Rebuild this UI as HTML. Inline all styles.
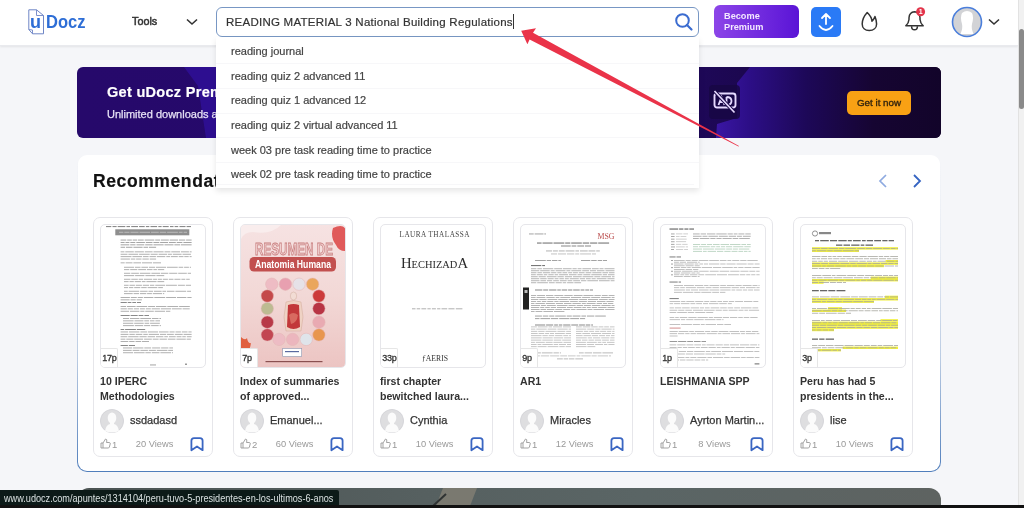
<!DOCTYPE html>
<html><head><meta charset="utf-8">
<style>
*{box-sizing:border-box;margin:0;padding:0}
html,body{width:1024px;height:508px;overflow:hidden}
body>*{will-change:transform}
body{background:#f5f6f9;font-family:"Liberation Sans",sans-serif;position:relative;color:#333}
.abs{position:absolute}
#header{position:absolute;left:0;top:0;width:1018px;height:46px;background:#fff;box-shadow:0 1px 2px rgba(0,0,0,0.08);border-bottom:1px solid #e9eaee}
#scroll{position:absolute;left:1018px;top:0;width:6px;height:508px;background:#f1f1f1;border-left:1px solid #e2e2e2}
#thumb{position:absolute;left:1019px;top:29px;width:5px;height:80px;background:#8a8a8a;border-radius:3px}
.logo{left:28px;top:9px}
.tools{left:132px;top:15px;font-size:10.8px;color:#333;-webkit-text-stroke:0.5px #333}
.search{left:216px;top:7px;width:483px;height:30px;border:1px solid #7897c4;border-radius:6px;background:#fff}
.search .txt{position:absolute;left:9px;top:8px;font-size:11.5px;letter-spacing:0.25px;color:#333;-webkit-text-stroke:0.2px #333;white-space:nowrap}
.dd{z-index:10;left:216px;top:37px;width:483px;height:151px;background:#fff;box-shadow:0 3px 6px rgba(0,0,0,0.10)}
.dd div{position:absolute;left:15px;font-size:11px;color:#444;-webkit-text-stroke:0.2px #444;white-space:nowrap}
.dd hr{position:absolute;left:0;width:100%;border:0;border-top:1px solid #f7f7f9}
.prem{left:714px;top:5px;width:85px;height:33px;border-radius:6px;background:linear-gradient(90deg,#8c45e8,#5a14d6);color:#f3e8ff;font-weight:bold;font-size:9.2px;line-height:11.5px;padding:5.8px 0 0 10px}
.upl{left:811px;top:7px;width:30px;height:30px;border-radius:5px;background:#2a7af6}
.banner{left:77px;top:67px;width:864px;height:71px;border-radius:6px;overflow:hidden;background:linear-gradient(90deg,#26096b 0%,#25096a 30%,#1e0858 72%,#12042a 100%)}
.btn{left:847px;top:91px;width:64px;height:24px;border-radius:5px;background:#f9a114;color:#33240e;font-size:9.8px;-webkit-text-stroke:0.35px #33240e;text-align:center;line-height:24px}
.sect{left:77px;top:154px;width:864px;height:318px;border-radius:10px;border:1px solid transparent;background:linear-gradient(#fff,#fff) padding-box,linear-gradient(to bottom,rgba(74,122,184,0) 0%,rgba(74,122,184,0.08) 30%,rgba(74,122,184,0.35) 65%,#4f7dbb 100%) border-box}
.rec{left:93px;top:171px;font-size:17.5px;letter-spacing:0.6px;-webkit-text-stroke:0.2px #111;font-weight:bold;color:#111}
.card{position:absolute;top:217px;width:120px;height:240px;border:1px solid #e6e6ea;border-radius:7px;background:#fff}
.card .th{position:absolute;left:6px;top:6px;width:106px;height:144px;border:1px solid #e6e6ea;border-radius:5px;overflow:hidden;background:#fff}
.card .pg{position:absolute;left:0;bottom:0;width:17px;height:19px;background:#fff;border-top:1px solid #e6e6e6;border-right:1px solid #e6e6e6;border-top-right-radius:2px;font-size:9px;color:#333;-webkit-text-stroke:0.3px #333;padding:3.5px 0 0 1.2px;letter-spacing:-0.2px;white-space:nowrap}
.card .tt{position:absolute;left:6px;top:155.5px;width:110px;font-size:10.6px;font-weight:bold;color:#333;line-height:15px}
.card .av{position:absolute;left:6px;top:191px;width:24px;height:24px;border-radius:50%;background:#e7e7e9;overflow:hidden}
.card .nm{position:absolute;left:36px;top:196px;font-size:11px;color:#333;-webkit-text-stroke:0.25px #333;white-space:nowrap}
.card .lk{position:absolute;left:6px;top:216.8px}
.card .ct{position:absolute;left:18px;top:220.5px;font-size:9.5px;color:#999}
.card .vw{position:absolute;left:30px;width:61px;text-align:center;top:220.5px;font-size:9.3px;color:#999;white-space:nowrap}
.card .bm{position:absolute;left:96px;top:219px}
.darkb{left:77px;top:488px;width:864px;height:30px;border-radius:12px 12px 0 0;overflow:hidden;background:linear-gradient(90deg,#4a5252 0%,#566060 40%,#5a6565 65%,#5e6361 100%)}
.status{left:0;top:490px;width:339px;height:18px;background:#0c1a18;color:#d9e0e0;font-size:11px;line-height:17px;padding-left:4px;white-space:nowrap;border-top-right-radius:2px}
.status span{display:inline-block;transform:scaleX(0.83);transform-origin:0 0}
.blackbar{left:0;top:505px;width:1024px;height:3px;background:#111}
</style></head><body>
<div id="header"></div>
<div id="scroll"></div><div id="thumb"></div>

<!-- logo -->
<svg class="abs logo" width="60" height="28" viewBox="0 0 60 28">
  <path d="M0.8 0.8 H8.5 L15.5 6.5 V24.8 H4.5 L0.8 20.5 Z" fill="#fff" stroke="#6f86c6" stroke-width="1"/>
  <path d="M8.5 0.8 V6.5 H15.5" fill="none" stroke="#6f86c6" stroke-width="0.9"/>
  <path d="M0.8 20.5 L4.5 21 V24.8" fill="none" stroke="#6f86c6" stroke-width="0.9"/>
  <text x="2" y="19" font-family="Liberation Sans" font-weight="bold" font-size="18" fill="#2e6ed6" textLength="11" lengthAdjust="spacingAndGlyphs">u</text>
  <text x="18" y="18.8" font-family="Liberation Sans" font-weight="bold" font-size="19" fill="#2e6ed6" textLength="39.5" lengthAdjust="spacingAndGlyphs">Docz</text>
</svg>
<div class="abs tools">Tools</div>
<svg class="abs" style="left:186px;top:18px" width="12" height="8" viewBox="0 0 12 8"><path d="M1 1.5 L6 6 L11 1.5" fill="none" stroke="#333" stroke-width="1.6"/></svg>

<div class="abs search"><span class="txt">READING MATERIAL 3 National Building Regulations</span></div>
<svg class="abs" style="left:674px;top:12px" width="20" height="20" viewBox="0 0 20 20"><circle cx="8.5" cy="8.5" r="6.3" fill="none" stroke="#3b6cd0" stroke-width="2"/><path d="M13 13 L17.5 17.5" stroke="#3b6cd0" stroke-width="2.2" stroke-linecap="round"/></svg>

<div class="abs dd">
  <div style="top:8px">reading journal</div>
  <hr style="top:26px">
  <div style="top:33px">reading quiz 2 advanced 11</div>
  <hr style="top:51px">
  <div style="top:57px">reading quiz 1 advanced 12</div>
  <hr style="top:76px">
  <div style="top:82px">reading quiz 2 virtual advanced 11</div>
  <hr style="top:100px">
  <div style="top:107px">week 03 pre task reading time to practice</div>
  <hr style="top:125px">
  <div style="top:131px">week 02 pre task reading time to practice</div>
  <hr style="top:147px;width:99%">
</div>

<div class="abs prem">Become<br>Premium</div>
<div class="abs upl"><svg width="30" height="30" viewBox="0 0 30 30"><path d="M15 17 V7.5 M11 11 L15 7 L19 11" fill="none" stroke="#fff" stroke-width="1.8" stroke-linecap="round" stroke-linejoin="round"/><path d="M8.5 19 Q15 27 21.5 19" fill="none" stroke="#fff" stroke-width="1.8" stroke-linecap="round"/></svg></div>
<svg class="abs" style="left:860px;top:11px" width="20" height="22" viewBox="0 0 20 22"><path d="M7.2 1.5 C4 5 2.2 9 2.2 13 C2.2 17 5 19.5 9.2 19.5 C13.5 19.5 16.6 17 16.6 13 C16.6 10 16 8 15 5.5 C14 8 13 9.5 12 10.2 C11.8 6.5 9.8 4 7.2 1.5 Z" fill="none" stroke="#333" stroke-width="1.5" stroke-linejoin="round"/></svg>
<svg class="abs" style="left:903px;top:6px" width="26" height="28" viewBox="0 0 26 28"><path d="M2.8 19.8 Q5.6 17.5 6 13.5 V11.8 Q6.4 6.2 11.5 5.8 Q16.6 6.2 17 11.8 V13.5 Q17.4 17.5 20.2 19.8 Z" fill="none" stroke="#333" stroke-width="1.5" stroke-linejoin="round"/><path d="M8.6 20.2 A2.9 3.6 0 0 0 14.4 20.2" fill="none" stroke="#333" stroke-width="1.5"/><circle cx="17.6" cy="5.8" r="4.5" fill="#e3344a"/><text x="17.6" y="8.4" text-anchor="middle" font-family="Liberation Sans" font-weight="bold" font-size="7" fill="#fff">1</text></svg>
<svg class="abs" style="left:951px;top:6px" width="32" height="32" viewBox="0 0 32 32"><circle cx="16" cy="16" r="14.5" fill="#d2d3d6"/><path d="M9.5 28 Q12 22 11 18 Q9 11 11 7 Q16 3 21 7 Q23 11 21 18 Q20 22 22.5 28 Z" fill="#fff"/><circle cx="16" cy="16" r="14.5" fill="none" stroke="#4a7edb" stroke-width="1.6"/></svg>
<svg class="abs" style="left:988px;top:18px" width="12" height="8" viewBox="0 0 12 8"><path d="M1 1.5 L6 6 L11 1.5" fill="none" stroke="#333" stroke-width="1.6"/></svg>
<div class="abs banner"><svg width="864" height="71" viewBox="0 0 864 71" style="position:absolute;left:0;top:0"><defs><linearGradient id="bg2" x1="639" x2="864" gradientUnits="userSpaceOnUse"><stop offset="0" stop-color="#3a16a4"/><stop offset="0.15" stop-color="#2c0e86"/><stop offset="0.4" stop-color="#1d0858"/><stop offset="0.7" stop-color="#160532"/><stop offset="1" stop-color="#12042a"/></linearGradient></defs><path d="M107 0 L121 19 L129 71 H145 V0 Z" fill="#30109a" opacity="0.8"/><path d="M673 0 L660 16 L660 51 L640 57 L639 71 H864 V0 Z" fill="url(#bg2)"/></svg>
<div style="position:absolute;left:30px;top:17px;font-size:14.5px;letter-spacing:0.3px;font-weight:bold;color:#fff;white-space:nowrap;-webkit-text-stroke:0.2px #fff">Get uDocz Premium</div>
<div style="position:absolute;left:30px;top:41px;font-size:11px;color:#e6e0f5;-webkit-text-stroke:0.25px #e6e0f5;white-space:nowrap">Unlimited downloads and no ads</div>
<div style="position:absolute;left:632px;top:18px;width:31px;height:34px;background:#180744;border-radius:4px;opacity:0.85"></div>
<svg width="26" height="26" viewBox="0 0 26 26" style="position:absolute;left:636px;top:23px"><rect x="1.5" y="3.5" width="21" height="14" rx="2.5" fill="none" stroke="#e6daff" stroke-width="1.9"/><path d="M5.5 15 L8.5 7 L11.5 15 M6.8 12 H10.2 M13.5 7 V15 M13.5 7 Q18.5 7 18.5 11 Q18.5 15 13.5 15" fill="none" stroke="#e6daff" stroke-width="1.8"/><path d="M1.5 1 L21.5 22.5" stroke="#1a0748" stroke-width="3.5"/><path d="M1.5 1 L21.5 22.5" stroke="#e6daff" stroke-width="1.7"/></svg>
</div>
<div class="abs btn">Get it now</div>

<div class="abs sect"></div>
<div class="abs rec">Recommendations</div>
<svg class="abs" style="left:876px;top:173px" width="48" height="16" viewBox="0 0 48 16"><path d="M10 2 L4 8 L10 14" fill="none" stroke="#8eaae0" stroke-width="1.7"/><path d="M38 2 L44 8 L38 14" fill="none" stroke="#3564c2" stroke-width="1.8"/></svg>

<div class="card" style="left:93px">
<div class="th"><svg width="106" height="143" viewBox="0 0 106 143"><rect x="5.0" y="1.0" width="5.3" height="1.1" fill="#8a8a8a"/><rect x="11.5" y="1.0" width="4.1" height="1.1" fill="#8a8a8a"/><rect x="16.7" y="1.0" width="7.6" height="1.1" fill="#8a8a8a"/><rect x="25.5" y="1.0" width="3.5" height="1.1" fill="#8a8a8a"/><rect x="30.2" y="1.0" width="6.8" height="1.1" fill="#8a8a8a"/><rect x="38.1" y="1.0" width="5.6" height="1.1" fill="#8a8a8a"/><rect x="44.9" y="1.0" width="3.4" height="1.1" fill="#8a8a8a"/><rect x="49.5" y="1.0" width="6.6" height="1.1" fill="#8a8a8a"/><rect x="57.3" y="1.0" width="3.3" height="1.1" fill="#8a8a8a"/><rect x="61.7" y="1.0" width="6.0" height="1.1" fill="#8a8a8a"/><rect x="69.0" y="1.0" width="3.5" height="1.1" fill="#8a8a8a"/><rect x="73.6" y="1.0" width="3.6" height="1.1" fill="#8a8a8a"/><rect x="78.5" y="1.0" width="6.0" height="1.1" fill="#8a8a8a"/><rect x="85.6" y="1.0" width="4.4" height="1.1" fill="#8a8a8a"/><rect x="14.3" y="4.3" width="74" height="6" fill="#8e8e8e"/><rect x="18.0" y="6.8" width="4.4" height="0.8" fill="#c8c8c8"/><rect x="23.3" y="6.8" width="5.2" height="0.8" fill="#c8c8c8"/><rect x="29.4" y="6.8" width="8.2" height="0.8" fill="#c8c8c8"/><rect x="38.5" y="6.8" width="10.6" height="0.8" fill="#c8c8c8"/><rect x="50.0" y="6.8" width="7.8" height="0.8" fill="#c8c8c8"/><rect x="58.7" y="6.8" width="6.5" height="0.8" fill="#c8c8c8"/><rect x="66.1" y="6.8" width="10.8" height="0.8" fill="#c8c8c8"/><rect x="77.8" y="6.8" width="3.8" height="0.8" fill="#c8c8c8"/><rect x="82.6" y="6.8" width="3.4" height="0.8" fill="#c8c8c8"/><rect x="19.6" y="14.6" width="5.7" height="0.9" fill="#9c9c9c"/><rect x="26.2" y="14.6" width="4.6" height="0.9" fill="#9c9c9c"/><rect x="31.7" y="14.6" width="4.4" height="0.9" fill="#9c9c9c"/><rect x="36.9" y="14.6" width="5.8" height="0.9" fill="#9c9c9c"/><rect x="43.7" y="14.6" width="9.6" height="0.9" fill="#9c9c9c"/><rect x="54.2" y="14.6" width="4.9" height="0.9" fill="#9c9c9c"/><rect x="59.9" y="14.6" width="7.9" height="0.9" fill="#9c9c9c"/><rect x="68.7" y="14.6" width="8.3" height="0.9" fill="#9c9c9c"/><rect x="77.9" y="14.6" width="6.3" height="0.9" fill="#9c9c9c"/><rect x="85.1" y="14.6" width="5.5" height="0.9" fill="#9c9c9c"/><rect x="19.6" y="17.0" width="4.0" height="0.9" fill="#9c9c9c"/><rect x="24.5" y="17.0" width="3.9" height="0.9" fill="#9c9c9c"/><rect x="29.3" y="17.0" width="5.0" height="0.9" fill="#9c9c9c"/><rect x="35.3" y="17.0" width="8.6" height="0.9" fill="#9c9c9c"/><rect x="44.8" y="17.0" width="6.7" height="0.9" fill="#9c9c9c"/><rect x="52.4" y="17.0" width="5.9" height="0.9" fill="#9c9c9c"/><rect x="59.1" y="17.0" width="7.9" height="0.9" fill="#9c9c9c"/><rect x="67.9" y="17.0" width="6.9" height="0.9" fill="#9c9c9c"/><rect x="75.7" y="17.0" width="5.7" height="0.9" fill="#9c9c9c"/><rect x="82.4" y="17.0" width="8.2" height="0.9" fill="#9c9c9c"/><rect x="19.6" y="19.4" width="8.7" height="0.9" fill="#9c9c9c"/><rect x="29.2" y="19.4" width="5.3" height="0.9" fill="#9c9c9c"/><rect x="35.5" y="19.4" width="7.8" height="0.9" fill="#9c9c9c"/><rect x="44.2" y="19.4" width="7.4" height="0.9" fill="#9c9c9c"/><rect x="52.5" y="19.4" width="10.1" height="0.9" fill="#9c9c9c"/><rect x="63.5" y="19.4" width="9.0" height="0.9" fill="#9c9c9c"/><rect x="73.4" y="19.4" width="5.7" height="0.9" fill="#9c9c9c"/><rect x="79.9" y="19.4" width="10.7" height="0.9" fill="#9c9c9c"/><rect x="19.6" y="21.8" width="4.4" height="0.9" fill="#9c9c9c"/><rect x="24.9" y="21.8" width="6.6" height="0.9" fill="#9c9c9c"/><rect x="32.4" y="21.8" width="9.2" height="0.9" fill="#9c9c9c"/><rect x="42.5" y="21.8" width="4.6" height="0.9" fill="#9c9c9c"/><rect x="48.0" y="21.8" width="7.1" height="0.9" fill="#9c9c9c"/><rect x="19.6" y="26.4" width="3.8" height="0.9" fill="#a8a8a8"/><rect x="24.3" y="26.4" width="8.5" height="0.9" fill="#a8a8a8"/><rect x="33.7" y="26.4" width="9.2" height="0.9" fill="#a8a8a8"/><rect x="43.8" y="26.4" width="7.8" height="0.9" fill="#a8a8a8"/><rect x="52.5" y="26.4" width="10.1" height="0.9" fill="#a8a8a8"/><rect x="63.5" y="26.4" width="5.9" height="0.9" fill="#a8a8a8"/><rect x="70.3" y="26.4" width="8.7" height="0.9" fill="#a8a8a8"/><rect x="79.9" y="26.4" width="8.0" height="0.9" fill="#a8a8a8"/><rect x="88.7" y="26.4" width="1.9" height="0.9" fill="#a8a8a8"/><rect x="19.6" y="28.8" width="6.9" height="0.9" fill="#a8a8a8"/><rect x="27.4" y="28.8" width="9.8" height="0.9" fill="#a8a8a8"/><rect x="38.1" y="28.8" width="10.6" height="0.9" fill="#a8a8a8"/><rect x="49.6" y="28.8" width="7.1" height="0.9" fill="#a8a8a8"/><rect x="57.6" y="28.8" width="8.5" height="0.9" fill="#a8a8a8"/><rect x="66.9" y="28.8" width="4.0" height="0.9" fill="#a8a8a8"/><rect x="71.8" y="28.8" width="8.8" height="0.9" fill="#a8a8a8"/><rect x="81.5" y="28.8" width="8.4" height="0.9" fill="#a8a8a8"/><rect x="19.6" y="31.2" width="10.9" height="0.9" fill="#a8a8a8"/><rect x="31.4" y="31.2" width="9.7" height="0.9" fill="#a8a8a8"/><rect x="42.0" y="31.2" width="5.6" height="0.9" fill="#a8a8a8"/><rect x="48.5" y="31.2" width="6.4" height="0.9" fill="#a8a8a8"/><rect x="55.8" y="31.2" width="8.5" height="0.9" fill="#a8a8a8"/><rect x="65.3" y="31.2" width="3.7" height="0.9" fill="#a8a8a8"/><rect x="69.8" y="31.2" width="7.0" height="0.9" fill="#a8a8a8"/><rect x="77.7" y="31.2" width="4.8" height="0.9" fill="#a8a8a8"/><rect x="83.3" y="31.2" width="4.4" height="0.9" fill="#a8a8a8"/><rect x="88.6" y="31.2" width="2.0" height="0.9" fill="#a8a8a8"/><rect x="19.6" y="33.6" width="9.3" height="0.9" fill="#a8a8a8"/><rect x="29.8" y="33.6" width="4.5" height="0.9" fill="#a8a8a8"/><rect x="35.1" y="33.6" width="5.4" height="0.9" fill="#a8a8a8"/><rect x="41.4" y="33.6" width="6.4" height="0.9" fill="#a8a8a8"/><rect x="48.7" y="33.6" width="6.4" height="0.9" fill="#a8a8a8"/><rect x="19.6" y="37.4" width="4.1" height="0.9" fill="#a8a8a8"/><rect x="24.6" y="37.4" width="6.9" height="0.9" fill="#a8a8a8"/><rect x="32.4" y="37.4" width="7.6" height="0.9" fill="#a8a8a8"/><rect x="40.9" y="37.4" width="10.1" height="0.9" fill="#a8a8a8"/><rect x="51.9" y="37.4" width="8.1" height="0.9" fill="#a8a8a8"/><rect x="23.0" y="41.8" width="10.0" height="0.9" fill="#a8a8a8"/><rect x="33.9" y="41.8" width="5.6" height="0.9" fill="#a8a8a8"/><rect x="40.4" y="41.8" width="6.6" height="0.9" fill="#a8a8a8"/><rect x="47.9" y="41.8" width="6.2" height="0.9" fill="#a8a8a8"/><rect x="55.0" y="41.8" width="10.1" height="0.9" fill="#a8a8a8"/><rect x="66.0" y="41.8" width="10.7" height="0.9" fill="#a8a8a8"/><rect x="77.6" y="41.8" width="4.6" height="0.9" fill="#a8a8a8"/><rect x="83.1" y="41.8" width="4.8" height="0.9" fill="#a8a8a8"/><rect x="88.8" y="41.8" width="1.2" height="0.9" fill="#a8a8a8"/><rect x="23.0" y="44.2" width="5.3" height="0.9" fill="#a8a8a8"/><rect x="29.2" y="44.2" width="7.1" height="0.9" fill="#a8a8a8"/><rect x="37.2" y="44.2" width="7.9" height="0.9" fill="#a8a8a8"/><rect x="46.0" y="44.2" width="5.5" height="0.9" fill="#a8a8a8"/><rect x="52.4" y="44.2" width="3.5" height="0.9" fill="#a8a8a8"/><rect x="56.8" y="44.2" width="6.4" height="0.9" fill="#a8a8a8"/><rect x="23.0" y="47.8" width="6.3" height="0.9" fill="#a8a8a8"/><rect x="30.2" y="47.8" width="7.7" height="0.9" fill="#a8a8a8"/><rect x="38.8" y="47.8" width="10.6" height="0.9" fill="#a8a8a8"/><rect x="50.4" y="47.8" width="8.7" height="0.9" fill="#a8a8a8"/><rect x="59.9" y="47.8" width="7.4" height="0.9" fill="#a8a8a8"/><rect x="68.2" y="47.8" width="8.1" height="0.9" fill="#a8a8a8"/><rect x="77.2" y="47.8" width="8.6" height="0.9" fill="#a8a8a8"/><rect x="86.7" y="47.8" width="3.3" height="0.9" fill="#a8a8a8"/><rect x="23.0" y="50.2" width="10.2" height="0.9" fill="#a8a8a8"/><rect x="34.1" y="50.2" width="9.3" height="0.9" fill="#a8a8a8"/><rect x="44.4" y="50.2" width="10.1" height="0.9" fill="#a8a8a8"/><rect x="55.4" y="50.2" width="7.8" height="0.9" fill="#a8a8a8"/><rect x="23.0" y="53.8" width="6.4" height="0.9" fill="#a8a8a8"/><rect x="30.3" y="53.8" width="6.5" height="0.9" fill="#a8a8a8"/><rect x="37.7" y="53.8" width="4.3" height="0.9" fill="#a8a8a8"/><rect x="42.9" y="53.8" width="8.3" height="0.9" fill="#a8a8a8"/><rect x="52.1" y="53.8" width="4.0" height="0.9" fill="#a8a8a8"/><rect x="56.9" y="53.8" width="4.0" height="0.9" fill="#a8a8a8"/><rect x="61.8" y="53.8" width="5.1" height="0.9" fill="#a8a8a8"/><rect x="67.8" y="53.8" width="4.7" height="0.9" fill="#a8a8a8"/><rect x="73.4" y="53.8" width="6.1" height="0.9" fill="#a8a8a8"/><rect x="80.4" y="53.8" width="3.9" height="0.9" fill="#a8a8a8"/><rect x="85.2" y="53.8" width="3.5" height="0.9" fill="#a8a8a8"/><rect x="23.0" y="56.2" width="4.6" height="0.9" fill="#a8a8a8"/><rect x="28.5" y="56.2" width="4.3" height="0.9" fill="#a8a8a8"/><rect x="33.7" y="56.2" width="6.2" height="0.9" fill="#a8a8a8"/><rect x="40.8" y="56.2" width="3.7" height="0.9" fill="#a8a8a8"/><rect x="45.4" y="56.2" width="10.1" height="0.9" fill="#a8a8a8"/><rect x="56.4" y="56.2" width="6.8" height="0.9" fill="#a8a8a8"/><rect x="23.0" y="59.8" width="4.6" height="0.9" fill="#a8a8a8"/><rect x="28.5" y="59.8" width="5.4" height="0.9" fill="#a8a8a8"/><rect x="34.8" y="59.8" width="6.1" height="0.9" fill="#a8a8a8"/><rect x="41.8" y="59.8" width="6.2" height="0.9" fill="#a8a8a8"/><rect x="48.9" y="59.8" width="4.4" height="0.9" fill="#a8a8a8"/><rect x="54.3" y="59.8" width="9.9" height="0.9" fill="#a8a8a8"/><rect x="65.0" y="59.8" width="10.9" height="0.9" fill="#a8a8a8"/><rect x="76.9" y="59.8" width="7.0" height="0.9" fill="#a8a8a8"/><rect x="84.8" y="59.8" width="5.2" height="0.9" fill="#a8a8a8"/><rect x="23.0" y="62.2" width="4.1" height="0.9" fill="#a8a8a8"/><rect x="28.0" y="62.2" width="4.3" height="0.9" fill="#a8a8a8"/><rect x="33.2" y="62.2" width="6.1" height="0.9" fill="#a8a8a8"/><rect x="40.2" y="62.2" width="5.5" height="0.9" fill="#a8a8a8"/><rect x="46.6" y="62.2" width="9.7" height="0.9" fill="#a8a8a8"/><rect x="57.2" y="62.2" width="4.7" height="0.9" fill="#a8a8a8"/><rect x="23.0" y="65.8" width="3.7" height="0.9" fill="#a8a8a8"/><rect x="27.6" y="65.8" width="10.6" height="0.9" fill="#a8a8a8"/><rect x="39.1" y="65.8" width="7.5" height="0.9" fill="#a8a8a8"/><rect x="47.5" y="65.8" width="4.6" height="0.9" fill="#a8a8a8"/><rect x="53.0" y="65.8" width="7.6" height="0.9" fill="#a8a8a8"/><rect x="61.4" y="65.8" width="3.7" height="0.9" fill="#a8a8a8"/><rect x="66.0" y="65.8" width="7.5" height="0.9" fill="#a8a8a8"/><rect x="74.4" y="65.8" width="10.8" height="0.9" fill="#a8a8a8"/><rect x="86.1" y="65.8" width="3.9" height="0.9" fill="#a8a8a8"/><rect x="23.0" y="68.2" width="8.7" height="0.9" fill="#a8a8a8"/><rect x="32.6" y="68.2" width="5.5" height="0.9" fill="#a8a8a8"/><rect x="39.0" y="68.2" width="6.3" height="0.9" fill="#a8a8a8"/><rect x="46.1" y="68.2" width="4.8" height="0.9" fill="#a8a8a8"/><rect x="51.8" y="68.2" width="9.3" height="0.9" fill="#a8a8a8"/><rect x="62.0" y="68.2" width="1.2" height="0.9" fill="#a8a8a8"/><rect x="19.6" y="72.0" width="9.3" height="0.9" fill="#a8a8a8"/><rect x="29.8" y="72.0" width="6.0" height="0.9" fill="#a8a8a8"/><rect x="36.7" y="72.0" width="5.2" height="0.9" fill="#a8a8a8"/><rect x="42.8" y="72.0" width="9.6" height="0.9" fill="#a8a8a8"/><rect x="53.3" y="72.0" width="10.9" height="0.9" fill="#a8a8a8"/><rect x="65.1" y="72.0" width="9.9" height="0.9" fill="#a8a8a8"/><rect x="75.9" y="72.0" width="9.5" height="0.9" fill="#a8a8a8"/><rect x="86.3" y="72.0" width="4.3" height="0.9" fill="#a8a8a8"/><rect x="19.6" y="74.4" width="9.0" height="0.9" fill="#a8a8a8"/><rect x="29.5" y="74.4" width="5.2" height="0.9" fill="#a8a8a8"/><rect x="35.6" y="74.4" width="5.3" height="0.9" fill="#a8a8a8"/><rect x="19.6" y="77.0" width="6.2" height="1.0" fill="#8a8a8a"/><rect x="26.7" y="77.0" width="3.7" height="1.0" fill="#8a8a8a"/><rect x="31.3" y="77.0" width="3.7" height="1.0" fill="#8a8a8a"/><rect x="35.9" y="77.0" width="4.1" height="1.0" fill="#8a8a8a"/><rect x="19.6" y="81.0" width="5.4" height="0.9" fill="#a8a8a8"/><rect x="25.9" y="81.0" width="8.7" height="0.9" fill="#a8a8a8"/><rect x="35.5" y="81.0" width="10.7" height="0.9" fill="#a8a8a8"/><rect x="47.1" y="81.0" width="6.9" height="0.9" fill="#a8a8a8"/><rect x="54.9" y="81.0" width="10.5" height="0.9" fill="#a8a8a8"/><rect x="66.3" y="81.0" width="10.9" height="0.9" fill="#a8a8a8"/><rect x="78.1" y="81.0" width="10.7" height="0.9" fill="#a8a8a8"/><rect x="19.6" y="83.4" width="6.2" height="0.9" fill="#a8a8a8"/><rect x="26.7" y="83.4" width="5.2" height="0.9" fill="#a8a8a8"/><rect x="32.8" y="83.4" width="5.2" height="0.9" fill="#a8a8a8"/><rect x="38.9" y="83.4" width="5.0" height="0.9" fill="#a8a8a8"/><rect x="44.8" y="83.4" width="5.0" height="0.9" fill="#a8a8a8"/><rect x="50.7" y="83.4" width="8.2" height="0.9" fill="#a8a8a8"/><rect x="59.8" y="83.4" width="10.3" height="0.9" fill="#a8a8a8"/><rect x="70.9" y="83.4" width="9.8" height="0.9" fill="#a8a8a8"/><rect x="81.6" y="83.4" width="7.1" height="0.9" fill="#a8a8a8"/><rect x="19.6" y="85.8" width="8.4" height="0.9" fill="#a8a8a8"/><rect x="28.9" y="85.8" width="9.5" height="0.9" fill="#a8a8a8"/><rect x="39.3" y="85.8" width="4.1" height="0.9" fill="#a8a8a8"/><rect x="44.3" y="85.8" width="8.5" height="0.9" fill="#a8a8a8"/><rect x="53.7" y="85.8" width="10.3" height="0.9" fill="#a8a8a8"/><rect x="64.9" y="85.8" width="4.4" height="0.9" fill="#a8a8a8"/><rect x="19.6" y="90.0" width="9.1" height="1.0" fill="#8a8a8a"/><rect x="29.6" y="90.0" width="7.1" height="1.0" fill="#8a8a8a"/><rect x="37.6" y="90.0" width="4.8" height="1.0" fill="#8a8a8a"/><rect x="43.4" y="90.0" width="4.6" height="1.0" fill="#8a8a8a"/><rect x="22.0" y="93.0" width="6.0" height="0.9" fill="#a8a8a8"/><rect x="28.9" y="93.0" width="9.5" height="0.9" fill="#a8a8a8"/><rect x="39.3" y="93.0" width="10.8" height="0.9" fill="#a8a8a8"/><rect x="51.0" y="93.0" width="6.5" height="0.9" fill="#a8a8a8"/><rect x="58.4" y="93.0" width="1.6" height="0.9" fill="#a8a8a8"/><rect x="22.0" y="95.4" width="10.6" height="0.9" fill="#a8a8a8"/><rect x="33.5" y="95.4" width="8.9" height="0.9" fill="#a8a8a8"/><rect x="43.3" y="95.4" width="4.8" height="0.9" fill="#a8a8a8"/><rect x="49.0" y="95.4" width="4.5" height="0.9" fill="#a8a8a8"/><rect x="54.4" y="95.4" width="4.6" height="0.9" fill="#a8a8a8"/><rect x="22.0" y="97.8" width="10.3" height="0.9" fill="#a8a8a8"/><rect x="33.2" y="97.8" width="9.5" height="0.9" fill="#a8a8a8"/><rect x="43.6" y="97.8" width="4.6" height="0.9" fill="#a8a8a8"/><rect x="49.1" y="97.8" width="9.7" height="0.9" fill="#a8a8a8"/><rect x="22.0" y="100.2" width="10.9" height="0.9" fill="#a8a8a8"/><rect x="33.8" y="100.2" width="8.4" height="0.9" fill="#a8a8a8"/><rect x="43.1" y="100.2" width="6.1" height="0.9" fill="#a8a8a8"/><rect x="50.1" y="100.2" width="7.6" height="0.9" fill="#a8a8a8"/><rect x="58.6" y="100.2" width="1.4" height="0.9" fill="#a8a8a8"/><rect x="19.6" y="104.0" width="3.6" height="1.0" fill="#8a8a8a"/><rect x="24.1" y="104.0" width="10.8" height="1.0" fill="#8a8a8a"/><rect x="35.8" y="104.0" width="8.4" height="1.0" fill="#8a8a8a"/><rect x="19.6" y="106.5" width="7.4" height="0.9" fill="#a8a8a8"/><rect x="27.9" y="106.5" width="10.5" height="0.9" fill="#a8a8a8"/><rect x="39.4" y="106.5" width="6.8" height="0.9" fill="#a8a8a8"/><rect x="47.0" y="106.5" width="10.0" height="0.9" fill="#a8a8a8"/><rect x="57.9" y="106.5" width="9.7" height="0.9" fill="#a8a8a8"/><rect x="68.5" y="106.5" width="5.1" height="0.9" fill="#a8a8a8"/><rect x="74.5" y="106.5" width="5.4" height="0.9" fill="#a8a8a8"/><rect x="80.8" y="106.5" width="5.7" height="0.9" fill="#a8a8a8"/><rect x="87.4" y="106.5" width="3.2" height="0.9" fill="#a8a8a8"/><rect x="19.6" y="108.9" width="7.9" height="0.9" fill="#a8a8a8"/><rect x="28.4" y="108.9" width="5.4" height="0.9" fill="#a8a8a8"/><rect x="34.7" y="108.9" width="6.6" height="0.9" fill="#a8a8a8"/><rect x="42.3" y="108.9" width="4.5" height="0.9" fill="#a8a8a8"/><rect x="47.7" y="108.9" width="10.3" height="0.9" fill="#a8a8a8"/><rect x="58.9" y="108.9" width="6.2" height="0.9" fill="#a8a8a8"/><rect x="65.9" y="108.9" width="6.9" height="0.9" fill="#a8a8a8"/><rect x="73.8" y="108.9" width="7.9" height="0.9" fill="#a8a8a8"/><rect x="82.6" y="108.9" width="8.0" height="0.9" fill="#a8a8a8"/><rect x="19.6" y="111.3" width="6.7" height="0.9" fill="#a8a8a8"/><rect x="27.2" y="111.3" width="10.4" height="0.9" fill="#a8a8a8"/><rect x="38.4" y="111.3" width="7.3" height="0.9" fill="#a8a8a8"/><rect x="46.6" y="111.3" width="7.5" height="0.9" fill="#a8a8a8"/><rect x="55.0" y="111.3" width="7.4" height="0.9" fill="#a8a8a8"/><rect x="63.3" y="111.3" width="3.6" height="0.9" fill="#a8a8a8"/><rect x="67.9" y="111.3" width="6.8" height="0.9" fill="#a8a8a8"/><rect x="75.6" y="111.3" width="4.9" height="0.9" fill="#a8a8a8"/><rect x="81.3" y="111.3" width="3.5" height="0.9" fill="#a8a8a8"/><rect x="85.8" y="111.3" width="4.8" height="0.9" fill="#a8a8a8"/><rect x="19.6" y="113.7" width="4.8" height="0.9" fill="#a8a8a8"/><rect x="25.3" y="113.7" width="7.1" height="0.9" fill="#a8a8a8"/><rect x="33.2" y="113.7" width="8.9" height="0.9" fill="#a8a8a8"/><rect x="43.1" y="113.7" width="7.7" height="0.9" fill="#a8a8a8"/><rect x="51.7" y="113.7" width="5.9" height="0.9" fill="#a8a8a8"/><rect x="58.5" y="113.7" width="7.4" height="0.9" fill="#a8a8a8"/><rect x="66.8" y="113.7" width="7.7" height="0.9" fill="#a8a8a8"/><rect x="75.4" y="113.7" width="9.4" height="0.9" fill="#a8a8a8"/><rect x="85.6" y="113.7" width="4.3" height="0.9" fill="#a8a8a8"/><rect x="19.6" y="116.1" width="7.7" height="0.9" fill="#a8a8a8"/><rect x="28.2" y="116.1" width="5.4" height="0.9" fill="#a8a8a8"/><rect x="34.5" y="116.1" width="5.6" height="0.9" fill="#a8a8a8"/><rect x="40.9" y="116.1" width="7.1" height="0.9" fill="#a8a8a8"/><rect x="19.6" y="120.0" width="7.3" height="1.0" fill="#8a8a8a"/><rect x="27.8" y="120.0" width="6.2" height="1.0" fill="#8a8a8a"/><rect x="22.0" y="122.5" width="9.2" height="0.9" fill="#a8a8a8"/><rect x="32.1" y="122.5" width="10.3" height="0.9" fill="#a8a8a8"/><rect x="43.3" y="122.5" width="6.8" height="0.9" fill="#a8a8a8"/><rect x="51.1" y="122.5" width="8.1" height="0.9" fill="#a8a8a8"/><rect x="60.1" y="122.5" width="7.3" height="0.9" fill="#a8a8a8"/><rect x="68.3" y="122.5" width="3.7" height="0.9" fill="#a8a8a8"/><rect x="22.0" y="124.9" width="8.7" height="0.9" fill="#a8a8a8"/><rect x="31.6" y="124.9" width="6.9" height="0.9" fill="#a8a8a8"/><rect x="39.4" y="124.9" width="7.5" height="0.9" fill="#a8a8a8"/><rect x="47.8" y="124.9" width="7.1" height="0.9" fill="#a8a8a8"/><rect x="55.8" y="124.9" width="10.6" height="0.9" fill="#a8a8a8"/><rect x="67.2" y="124.9" width="4.8" height="0.9" fill="#a8a8a8"/><rect x="22.0" y="127.3" width="10.1" height="0.9" fill="#a8a8a8"/><rect x="33.0" y="127.3" width="10.6" height="0.9" fill="#a8a8a8"/><rect x="44.4" y="127.3" width="5.4" height="0.9" fill="#a8a8a8"/><rect x="50.8" y="127.3" width="7.7" height="0.9" fill="#a8a8a8"/><rect x="59.4" y="127.3" width="10.6" height="0.9" fill="#a8a8a8"/><rect x="70.9" y="127.3" width="1.1" height="0.9" fill="#a8a8a8"/><rect x="49" y="139.5" width="6" height="0.9" fill="#999"/><rect x="84" y="138.5" width="2" height="1.5" fill="#999"/></svg><div class="pg">17p</div></div>
<div class="tt">10 IPERC<br>Methodologies</div>
<div class="av"><svg width="24" height="24" viewBox="0 0 24 24"><circle cx="12" cy="12" r="11.5" fill="#dedee0" stroke="#d6d6da" stroke-width="1"/><ellipse cx="12" cy="9" rx="4.3" ry="5.6" fill="#fbfbfb"/><path d="M10 13 V15 Q6 16 5 22 Q12 25 19 22 Q18 16 14 15 V13 Z" fill="#fbfbfb"/></svg></div>
<div class="nm">ssdadasd</div>
<div class="lk"><svg width="11" height="11" viewBox="0 0 11 11"><path d="M1 5 H3 V10 H1 Z M3 5 L5.5 1 Q7 1 6.8 3 L6.5 4.5 H9.5 Q10.5 4.7 10.2 6 L9.3 9.3 Q9 10 8 10 H3" fill="none" stroke="#9a9a9a" stroke-width="0.9" stroke-linejoin="round"/></svg></div>
<div class="ct">1</div>
<div class="vw">20 Views</div>
<div class="bm"><svg width="14" height="15" viewBox="0 0 14 15"><path d="M1.4 3.8 Q1.4 1.2 4 1.2 H10 Q12.6 1.2 12.6 3.8 V13.2 L7 9.4 L1.4 13.2 Z" fill="none" stroke="#3a66c2" stroke-width="1.8" stroke-linejoin="round"/></svg></div>
</div>
<div class="card" style="left:233px">
<div class="th"><svg width="106" height="143" viewBox="0 0 106 143"><defs><linearGradient id="pk" x1="0" y1="0" x2="0" y2="1"><stop offset="0" stop-color="#f6e2e2"/><stop offset="0.5" stop-color="#f2d8d6"/><stop offset="1" stop-color="#ecc4c2"/></linearGradient></defs><rect x="0" y="0" width="106" height="143" fill="url(#pk)"/><path d="M0 0 H40 Q30 10 12 7 Q3 7 0 14 Z" fill="#f9eded"/><path d="M92 3 Q104 -3 106 8 V26 Q98 27 95 20 Q89 12 92 3 Z" fill="#e05a5a"/><text x="53" y="30" text-anchor="middle" font-family="Liberation Sans" font-weight="bold" font-size="16" fill="#f0cfcf" stroke="#c98080" stroke-width="0.8" textLength="78" lengthAdjust="spacingAndGlyphs">RESUMEN DE</text><rect x="8.5" y="32" width="86.5" height="14.5" rx="4.5" fill="#c2504f"/><text x="52" y="43.3" text-anchor="middle" font-family="Liberation Sans" font-weight="bold" font-size="10.5" fill="#fff" textLength="76" lengthAdjust="spacingAndGlyphs">Anatomia Humana</text><circle cx="30.8" cy="59.2" r="6.2" fill="#eebcc4" stroke="#e2b4b4" stroke-width="0.5"/><circle cx="44.4" cy="59.2" r="6.2" fill="#e8a0b0" stroke="#e2b4b4" stroke-width="0.5"/><circle cx="58.0" cy="59.2" r="6.2" fill="#e6e2e8" stroke="#e2b4b4" stroke-width="0.5"/><circle cx="71.6" cy="59.2" r="6.2" fill="#eaa65c" stroke="#e2b4b4" stroke-width="0.5"/><circle cx="26.3" cy="71.0" r="6.2" fill="#c44a4a" stroke="#e2b4b4" stroke-width="0.5"/><circle cx="26.3" cy="83.6" r="6.2" fill="#bdbb92" stroke="#e2b4b4" stroke-width="0.5"/><circle cx="26.3" cy="97.2" r="6.2" fill="#b83a48" stroke="#e2b4b4" stroke-width="0.5"/><circle cx="26.3" cy="109.9" r="6.2" fill="#c24652" stroke="#e2b4b4" stroke-width="0.5"/><circle cx="77.9" cy="71.0" r="6.2" fill="#cc3a3a" stroke="#e2b4b4" stroke-width="0.5"/><circle cx="77.9" cy="83.6" r="6.2" fill="#b83444" stroke="#e2b4b4" stroke-width="0.5"/><circle cx="77.9" cy="97.2" r="6.2" fill="#e9aab2" stroke="#e2b4b4" stroke-width="0.5"/><circle cx="77.9" cy="109.9" r="6.2" fill="#e8964e" stroke="#e2b4b4" stroke-width="0.5"/><circle cx="38.0" cy="114.4" r="6.2" fill="#edbcc4" stroke="#e2b4b4" stroke-width="0.5"/><circle cx="51.6" cy="114.4" r="6.2" fill="#ecb6be" stroke="#e2b4b4" stroke-width="0.5"/><circle cx="65.2" cy="114.4" r="6.2" fill="#dfe4ea" stroke="#e2b4b4" stroke-width="0.5"/><ellipse cx="52.5" cy="71" rx="3.2" ry="4" fill="#f2dcd4" stroke="#c8a090" stroke-width="0.4"/><path d="M45 77 Q52.5 74 60 77 L62 92 L60 106 H45 L43 92 Z" fill="#efd2c4" stroke="#c9a08e" stroke-width="0.4"/><path d="M47 80 Q52.5 78 58 80 L59 102 Q52.5 106 46 102 Z" fill="#c2383a"/><path d="M48 90 Q52 86 57 90 Q56 98 50 99 Z" fill="#d86a60"/><path d="M0 124 L0 112 Q4 116 6 113 Q7 119 10 118 Q9 124 8 124 Z" fill="#e06040"/><rect x="41.7" y="123.5" width="19" height="8" fill="#fff" stroke="#8a94b0" stroke-width="0.6"/><rect x="44" y="126" width="14" height="1.2" fill="#5a6aa0"/><rect x="24.5" y="136" width="57" height="1.2" fill="#8a5050"/></svg><div class="pg">7p</div></div>
<div class="tt">Index of summaries<br>of approved...</div>
<div class="av"><svg width="24" height="24" viewBox="0 0 24 24"><circle cx="12" cy="12" r="11.5" fill="#dedee0" stroke="#d6d6da" stroke-width="1"/><ellipse cx="12" cy="9" rx="4.3" ry="5.6" fill="#fbfbfb"/><path d="M10 13 V15 Q6 16 5 22 Q12 25 19 22 Q18 16 14 15 V13 Z" fill="#fbfbfb"/></svg></div>
<div class="nm">Emanuel...</div>
<div class="lk"><svg width="11" height="11" viewBox="0 0 11 11"><path d="M1 5 H3 V10 H1 Z M3 5 L5.5 1 Q7 1 6.8 3 L6.5 4.5 H9.5 Q10.5 4.7 10.2 6 L9.3 9.3 Q9 10 8 10 H3" fill="none" stroke="#9a9a9a" stroke-width="0.9" stroke-linejoin="round"/></svg></div>
<div class="ct">2</div>
<div class="vw">60 Views</div>
<div class="bm"><svg width="14" height="15" viewBox="0 0 14 15"><path d="M1.4 3.8 Q1.4 1.2 4 1.2 H10 Q12.6 1.2 12.6 3.8 V13.2 L7 9.4 L1.4 13.2 Z" fill="none" stroke="#3a66c2" stroke-width="1.8" stroke-linejoin="round"/></svg></div>
</div>
<div class="card" style="left:373px">
<div class="th"><svg width="106" height="143" viewBox="0 0 106 143"><text x="53.5" y="12" text-anchor="middle" font-family="Liberation Serif" font-size="7.2" fill="#444" textLength="70" lengthAdjust="spacing">LAURA THALASSA</text><text x="53.5" y="43" text-anchor="middle" font-family="Liberation Serif" font-size="15.5" fill="#2a2a2a" textLength="67" lengthAdjust="spacingAndGlyphs">H<tspan font-size="11">ECHIZAD</tspan>A</text><rect x="31.0" y="83.3" width="3.5" height="1.0" fill="#b0b0b0"/><rect x="35.7" y="83.3" width="3.5" height="1.0" fill="#b0b0b0"/><rect x="40.4" y="83.3" width="4.8" height="1.0" fill="#b0b0b0"/><rect x="46.4" y="83.3" width="3.3" height="1.0" fill="#b0b0b0"/><rect x="50.9" y="83.3" width="4.0" height="1.0" fill="#b0b0b0"/><rect x="56.1" y="83.3" width="3.3" height="1.0" fill="#b0b0b0"/><rect x="60.5" y="83.3" width="5.7" height="1.0" fill="#b0b0b0"/><rect x="67.4" y="83.3" width="6.1" height="1.0" fill="#b0b0b0"/><rect x="74.8" y="83.3" width="6.6" height="1.0" fill="#b0b0b0"/><text x="54" y="135.5" text-anchor="middle" font-family="Liberation Serif" font-size="8" fill="#333" textLength="26" lengthAdjust="spacingAndGlyphs">&#402;AERIS</text></svg><div class="pg">33p</div></div>
<div class="tt">first chapter<br>bewitched laura...</div>
<div class="av"><svg width="24" height="24" viewBox="0 0 24 24"><circle cx="12" cy="12" r="11.5" fill="#dedee0" stroke="#d6d6da" stroke-width="1"/><ellipse cx="12" cy="9" rx="4.3" ry="5.6" fill="#fbfbfb"/><path d="M10 13 V15 Q6 16 5 22 Q12 25 19 22 Q18 16 14 15 V13 Z" fill="#fbfbfb"/></svg></div>
<div class="nm">Cynthia</div>
<div class="lk"><svg width="11" height="11" viewBox="0 0 11 11"><path d="M1 5 H3 V10 H1 Z M3 5 L5.5 1 Q7 1 6.8 3 L6.5 4.5 H9.5 Q10.5 4.7 10.2 6 L9.3 9.3 Q9 10 8 10 H3" fill="none" stroke="#9a9a9a" stroke-width="0.9" stroke-linejoin="round"/></svg></div>
<div class="ct">1</div>
<div class="vw">10 Views</div>
<div class="bm"><svg width="14" height="15" viewBox="0 0 14 15"><path d="M1.4 3.8 Q1.4 1.2 4 1.2 H10 Q12.6 1.2 12.6 3.8 V13.2 L7 9.4 L1.4 13.2 Z" fill="none" stroke="#3a66c2" stroke-width="1.8" stroke-linejoin="round"/></svg></div>
</div>
<div class="card" style="left:513px">
<div class="th"><svg width="106" height="143" viewBox="0 0 106 143"><rect x="8.0" y="8.5" width="4.7" height="0.9" fill="#999"/><rect x="13.6" y="8.5" width="8.9" height="0.9" fill="#999"/><rect x="23.3" y="8.5" width="1.7" height="0.9" fill="#999"/><text x="85" y="14" text-anchor="middle" font-family="Liberation Serif" font-size="9" fill="#b84848" textLength="17" lengthAdjust="spacingAndGlyphs">MSG</text><rect x="16.0" y="17.5" width="4.6" height="1.1" fill="#777"/><rect x="21.5" y="17.5" width="10.1" height="1.1" fill="#777"/><rect x="32.5" y="17.5" width="10.8" height="1.1" fill="#777"/><rect x="44.2" y="17.5" width="5.1" height="1.1" fill="#777"/><rect x="50.2" y="17.5" width="10.6" height="1.1" fill="#777"/><rect x="61.7" y="17.5" width="6.5" height="1.1" fill="#777"/><rect x="69.1" y="17.5" width="7.2" height="1.1" fill="#777"/><rect x="77.2" y="17.5" width="10.9" height="1.1" fill="#777"/><rect x="40.0" y="20.5" width="9.7" height="1.0" fill="#888"/><rect x="50.6" y="20.5" width="4.7" height="1.0" fill="#888"/><rect x="56.3" y="20.5" width="6.7" height="1.0" fill="#888"/><rect x="63.9" y="20.5" width="6.1" height="1.0" fill="#888"/><rect x="25.0" y="25.5" width="6.0" height="0.9" fill="#aaa"/><rect x="31.9" y="25.5" width="5.0" height="0.9" fill="#aaa"/><rect x="37.8" y="25.5" width="5.9" height="0.9" fill="#aaa"/><rect x="44.6" y="25.5" width="8.9" height="0.9" fill="#aaa"/><rect x="54.4" y="25.5" width="3.6" height="0.9" fill="#aaa"/><rect x="59.0" y="25.5" width="7.7" height="0.9" fill="#aaa"/><rect x="67.5" y="25.5" width="6.8" height="0.9" fill="#aaa"/><rect x="75.2" y="25.5" width="3.6" height="0.9" fill="#aaa"/><rect x="30.0" y="28.5" width="6.0" height="0.9" fill="#bbb"/><rect x="36.9" y="28.5" width="8.2" height="0.9" fill="#bbb"/><rect x="46.0" y="28.5" width="7.3" height="0.9" fill="#bbb"/><rect x="54.2" y="28.5" width="4.0" height="0.9" fill="#bbb"/><rect x="59.1" y="28.5" width="10.9" height="0.9" fill="#bbb"/><rect x="70.9" y="28.5" width="4.1" height="0.9" fill="#bbb"/><rect x="14.0" y="35.0" width="10.8" height="0.9" fill="#999"/><rect x="25.7" y="35.0" width="4.3" height="0.9" fill="#999"/><rect x="30.9" y="35.0" width="5.5" height="0.9" fill="#999"/><rect x="37.3" y="35.0" width="2.7" height="0.9" fill="#999"/><rect x="60.0" y="35.0" width="9.3" height="0.9" fill="#999"/><rect x="70.2" y="35.0" width="5.5" height="0.9" fill="#999"/><rect x="76.7" y="35.0" width="4.5" height="0.9" fill="#999"/><rect x="82.0" y="35.0" width="4.0" height="0.9" fill="#999"/><rect x="10.0" y="40.0" width="10.3" height="1.1" fill="#777"/><rect x="21.2" y="40.0" width="2.8" height="1.1" fill="#777"/><rect x="10.0" y="43.3" width="5.4" height="0.9" fill="#adadad"/><rect x="16.3" y="43.3" width="4.6" height="0.9" fill="#adadad"/><rect x="21.9" y="43.3" width="10.4" height="0.9" fill="#adadad"/><rect x="33.2" y="43.3" width="7.8" height="0.9" fill="#adadad"/><rect x="41.8" y="43.3" width="8.8" height="0.9" fill="#adadad"/><rect x="51.5" y="43.3" width="4.2" height="0.9" fill="#adadad"/><rect x="56.6" y="43.3" width="3.9" height="0.9" fill="#adadad"/><rect x="61.4" y="43.3" width="8.7" height="0.9" fill="#adadad"/><rect x="71.0" y="43.3" width="6.7" height="0.9" fill="#adadad"/><rect x="78.5" y="43.3" width="4.0" height="0.9" fill="#adadad"/><rect x="83.5" y="43.3" width="10.0" height="0.9" fill="#adadad"/><rect x="10.0" y="45.3" width="8.3" height="0.9" fill="#adadad"/><rect x="19.2" y="45.3" width="9.5" height="0.9" fill="#adadad"/><rect x="29.6" y="45.3" width="4.1" height="0.9" fill="#adadad"/><rect x="34.6" y="45.3" width="9.9" height="0.9" fill="#adadad"/><rect x="45.4" y="45.3" width="4.0" height="0.9" fill="#adadad"/><rect x="50.3" y="45.3" width="10.0" height="0.9" fill="#adadad"/><rect x="61.2" y="45.3" width="6.9" height="0.9" fill="#adadad"/><rect x="69.0" y="45.3" width="6.0" height="0.9" fill="#adadad"/><rect x="75.9" y="45.3" width="7.6" height="0.9" fill="#adadad"/><rect x="84.5" y="45.3" width="9.0" height="0.9" fill="#adadad"/><rect x="10.0" y="47.3" width="5.5" height="0.9" fill="#adadad"/><rect x="16.4" y="47.3" width="4.5" height="0.9" fill="#adadad"/><rect x="21.8" y="47.3" width="7.5" height="0.9" fill="#adadad"/><rect x="30.1" y="47.3" width="5.3" height="0.9" fill="#adadad"/><rect x="36.3" y="47.3" width="4.3" height="0.9" fill="#adadad"/><rect x="41.5" y="47.3" width="4.7" height="0.9" fill="#adadad"/><rect x="47.2" y="47.3" width="3.9" height="0.9" fill="#adadad"/><rect x="51.9" y="47.3" width="5.0" height="0.9" fill="#adadad"/><rect x="57.8" y="47.3" width="5.8" height="0.9" fill="#adadad"/><rect x="64.6" y="47.3" width="5.8" height="0.9" fill="#adadad"/><rect x="71.3" y="47.3" width="9.2" height="0.9" fill="#adadad"/><rect x="81.4" y="47.3" width="5.7" height="0.9" fill="#adadad"/><rect x="87.9" y="47.3" width="5.6" height="0.9" fill="#adadad"/><rect x="10.0" y="49.3" width="4.8" height="0.9" fill="#adadad"/><rect x="15.7" y="49.3" width="6.1" height="0.9" fill="#adadad"/><rect x="22.7" y="49.3" width="3.6" height="0.9" fill="#adadad"/><rect x="27.3" y="49.3" width="5.4" height="0.9" fill="#adadad"/><rect x="33.6" y="49.3" width="3.6" height="0.9" fill="#adadad"/><rect x="38.1" y="49.3" width="9.0" height="0.9" fill="#adadad"/><rect x="48.0" y="49.3" width="7.6" height="0.9" fill="#adadad"/><rect x="56.5" y="49.3" width="4.9" height="0.9" fill="#adadad"/><rect x="62.3" y="49.3" width="7.1" height="0.9" fill="#adadad"/><rect x="70.3" y="49.3" width="10.5" height="0.9" fill="#adadad"/><rect x="81.7" y="49.3" width="4.3" height="0.9" fill="#adadad"/><rect x="86.9" y="49.3" width="6.6" height="0.9" fill="#adadad"/><rect x="10.0" y="51.3" width="6.7" height="0.9" fill="#adadad"/><rect x="17.6" y="51.3" width="7.2" height="0.9" fill="#adadad"/><rect x="25.8" y="51.3" width="9.8" height="0.9" fill="#adadad"/><rect x="36.4" y="51.3" width="6.4" height="0.9" fill="#adadad"/><rect x="43.8" y="51.3" width="7.3" height="0.9" fill="#adadad"/><rect x="52.0" y="51.3" width="8.7" height="0.9" fill="#adadad"/><rect x="61.5" y="51.3" width="10.9" height="0.9" fill="#adadad"/><rect x="73.3" y="51.3" width="6.1" height="0.9" fill="#adadad"/><rect x="80.3" y="51.3" width="9.7" height="0.9" fill="#adadad"/><rect x="90.9" y="51.3" width="2.6" height="0.9" fill="#adadad"/><rect x="10.0" y="53.3" width="8.3" height="0.9" fill="#adadad"/><rect x="19.2" y="53.3" width="6.5" height="0.9" fill="#adadad"/><rect x="26.6" y="53.3" width="6.1" height="0.9" fill="#adadad"/><rect x="33.6" y="53.3" width="3.9" height="0.9" fill="#adadad"/><rect x="38.4" y="53.3" width="4.5" height="0.9" fill="#adadad"/><rect x="43.8" y="53.3" width="4.0" height="0.9" fill="#adadad"/><rect x="48.7" y="53.3" width="9.1" height="0.9" fill="#adadad"/><rect x="58.7" y="53.3" width="5.4" height="0.9" fill="#adadad"/><rect x="65.0" y="53.3" width="4.7" height="0.9" fill="#adadad"/><rect x="70.6" y="53.3" width="4.1" height="0.9" fill="#adadad"/><rect x="75.7" y="53.3" width="9.8" height="0.9" fill="#adadad"/><rect x="86.4" y="53.3" width="7.1" height="0.9" fill="#adadad"/><rect x="10.0" y="55.3" width="8.5" height="0.9" fill="#adadad"/><rect x="19.4" y="55.3" width="5.6" height="0.9" fill="#adadad"/><rect x="25.9" y="55.3" width="5.3" height="0.9" fill="#adadad"/><rect x="32.2" y="55.3" width="5.7" height="0.9" fill="#adadad"/><rect x="38.8" y="55.3" width="6.9" height="0.9" fill="#adadad"/><rect x="46.6" y="55.3" width="4.7" height="0.9" fill="#adadad"/><rect x="52.2" y="55.3" width="6.8" height="0.9" fill="#adadad"/><rect x="59.9" y="55.3" width="5.5" height="0.9" fill="#adadad"/><rect x="66.3" y="55.3" width="10.7" height="0.9" fill="#adadad"/><rect x="77.9" y="55.3" width="10.8" height="0.9" fill="#adadad"/><rect x="89.6" y="55.3" width="3.9" height="0.9" fill="#adadad"/><rect x="10.0" y="57.3" width="5.3" height="0.9" fill="#adadad"/><rect x="16.2" y="57.3" width="10.7" height="0.9" fill="#adadad"/><rect x="27.9" y="57.3" width="5.8" height="0.9" fill="#adadad"/><rect x="34.6" y="57.3" width="6.2" height="0.9" fill="#adadad"/><rect x="41.7" y="57.3" width="3.5" height="0.9" fill="#adadad"/><rect x="46.1" y="57.3" width="6.4" height="0.9" fill="#adadad"/><rect x="53.3" y="57.3" width="6.8" height="0.9" fill="#adadad"/><rect x="14.0" y="64.5" width="7.3" height="1.0" fill="#888"/><rect x="22.2" y="64.5" width="5.0" height="1.0" fill="#888"/><rect x="28.1" y="64.5" width="7.3" height="1.0" fill="#888"/><rect x="36.3" y="64.5" width="3.5" height="1.0" fill="#888"/><rect x="40.7" y="64.5" width="5.5" height="1.0" fill="#888"/><rect x="47.1" y="64.5" width="4.2" height="1.0" fill="#888"/><rect x="52.2" y="64.5" width="6.5" height="1.0" fill="#888"/><rect x="59.6" y="64.5" width="3.8" height="1.0" fill="#888"/><rect x="64.3" y="64.5" width="3.7" height="1.0" fill="#888"/><rect x="68.8" y="64.5" width="3.2" height="1.0" fill="#888"/><rect x="10.0" y="70.0" width="5.2" height="0.9" fill="#adadad"/><rect x="16.1" y="70.0" width="7.9" height="0.9" fill="#adadad"/><rect x="24.9" y="70.0" width="7.5" height="0.9" fill="#adadad"/><rect x="33.3" y="70.0" width="9.1" height="0.9" fill="#adadad"/><rect x="43.3" y="70.0" width="8.4" height="0.9" fill="#adadad"/><rect x="52.7" y="70.0" width="8.9" height="0.9" fill="#adadad"/><rect x="62.4" y="70.0" width="10.1" height="0.9" fill="#adadad"/><rect x="73.4" y="70.0" width="6.4" height="0.9" fill="#adadad"/><rect x="80.8" y="70.0" width="5.9" height="0.9" fill="#adadad"/><rect x="87.6" y="70.0" width="5.9" height="0.9" fill="#adadad"/><rect x="10.0" y="72.0" width="4.6" height="0.9" fill="#adadad"/><rect x="15.5" y="72.0" width="8.9" height="0.9" fill="#adadad"/><rect x="25.4" y="72.0" width="8.3" height="0.9" fill="#adadad"/><rect x="34.6" y="72.0" width="3.8" height="0.9" fill="#adadad"/><rect x="39.3" y="72.0" width="9.8" height="0.9" fill="#adadad"/><rect x="50.0" y="72.0" width="10.2" height="0.9" fill="#adadad"/><rect x="61.1" y="72.0" width="8.2" height="0.9" fill="#adadad"/><rect x="70.2" y="72.0" width="9.0" height="0.9" fill="#adadad"/><rect x="80.1" y="72.0" width="9.6" height="0.9" fill="#adadad"/><rect x="90.6" y="72.0" width="2.9" height="0.9" fill="#adadad"/><rect x="10.0" y="74.0" width="7.4" height="0.9" fill="#adadad"/><rect x="18.3" y="74.0" width="7.3" height="0.9" fill="#adadad"/><rect x="26.5" y="74.0" width="9.8" height="0.9" fill="#adadad"/><rect x="37.2" y="74.0" width="9.5" height="0.9" fill="#adadad"/><rect x="47.6" y="74.0" width="9.7" height="0.9" fill="#adadad"/><rect x="58.2" y="74.0" width="7.9" height="0.9" fill="#adadad"/><rect x="67.0" y="74.0" width="10.2" height="0.9" fill="#adadad"/><rect x="78.1" y="74.0" width="8.6" height="0.9" fill="#adadad"/><rect x="87.6" y="74.0" width="5.9" height="0.9" fill="#adadad"/><rect x="10.0" y="76.0" width="5.2" height="0.9" fill="#adadad"/><rect x="16.1" y="76.0" width="3.7" height="0.9" fill="#adadad"/><rect x="20.8" y="76.0" width="4.5" height="0.9" fill="#adadad"/><rect x="26.2" y="76.0" width="6.2" height="0.9" fill="#adadad"/><rect x="33.3" y="76.0" width="4.3" height="0.9" fill="#adadad"/><rect x="38.4" y="76.0" width="9.8" height="0.9" fill="#adadad"/><rect x="49.1" y="76.0" width="7.7" height="0.9" fill="#adadad"/><rect x="57.7" y="76.0" width="8.2" height="0.9" fill="#adadad"/><rect x="66.8" y="76.0" width="8.2" height="0.9" fill="#adadad"/><rect x="75.9" y="76.0" width="8.6" height="0.9" fill="#adadad"/><rect x="85.4" y="76.0" width="7.2" height="0.9" fill="#adadad"/><rect x="10.0" y="78.0" width="3.5" height="0.9" fill="#adadad"/><rect x="14.4" y="78.0" width="9.5" height="0.9" fill="#adadad"/><rect x="24.8" y="78.0" width="9.1" height="0.9" fill="#adadad"/><rect x="34.8" y="78.0" width="7.3" height="0.9" fill="#adadad"/><rect x="43.0" y="78.0" width="7.5" height="0.9" fill="#adadad"/><rect x="51.4" y="78.0" width="8.4" height="0.9" fill="#adadad"/><rect x="60.8" y="78.0" width="4.0" height="0.9" fill="#adadad"/><rect x="65.6" y="78.0" width="9.0" height="0.9" fill="#adadad"/><rect x="75.6" y="78.0" width="5.4" height="0.9" fill="#adadad"/><rect x="81.9" y="78.0" width="4.1" height="0.9" fill="#adadad"/><rect x="86.8" y="78.0" width="5.5" height="0.9" fill="#adadad"/><rect x="10.0" y="80.0" width="9.0" height="0.9" fill="#adadad"/><rect x="19.9" y="80.0" width="5.0" height="0.9" fill="#adadad"/><rect x="25.8" y="80.0" width="9.0" height="0.9" fill="#adadad"/><rect x="35.8" y="80.0" width="10.8" height="0.9" fill="#adadad"/><rect x="47.5" y="80.0" width="7.2" height="0.9" fill="#adadad"/><rect x="55.6" y="80.0" width="6.4" height="0.9" fill="#adadad"/><rect x="62.8" y="80.0" width="7.1" height="0.9" fill="#adadad"/><rect x="70.8" y="80.0" width="8.6" height="0.9" fill="#adadad"/><rect x="80.4" y="80.0" width="9.3" height="0.9" fill="#adadad"/><rect x="90.5" y="80.0" width="3.0" height="0.9" fill="#adadad"/><rect x="10.0" y="82.0" width="8.3" height="0.9" fill="#adadad"/><rect x="19.2" y="82.0" width="4.1" height="0.9" fill="#adadad"/><rect x="24.2" y="82.0" width="4.6" height="0.9" fill="#adadad"/><rect x="29.7" y="82.0" width="5.4" height="0.9" fill="#adadad"/><rect x="36.0" y="82.0" width="9.1" height="0.9" fill="#adadad"/><rect x="46.0" y="82.0" width="5.8" height="0.9" fill="#adadad"/><rect x="52.7" y="82.0" width="7.8" height="0.9" fill="#adadad"/><rect x="61.3" y="82.0" width="3.6" height="0.9" fill="#adadad"/><rect x="65.8" y="82.0" width="4.0" height="0.9" fill="#adadad"/><rect x="70.7" y="82.0" width="5.5" height="0.9" fill="#adadad"/><rect x="77.1" y="82.0" width="8.5" height="0.9" fill="#adadad"/><rect x="86.5" y="82.0" width="7.0" height="0.9" fill="#adadad"/><rect x="10.0" y="84.0" width="8.6" height="0.9" fill="#adadad"/><rect x="19.5" y="84.0" width="5.7" height="0.9" fill="#adadad"/><rect x="26.0" y="84.0" width="7.4" height="0.9" fill="#adadad"/><rect x="34.3" y="84.0" width="7.0" height="0.9" fill="#adadad"/><rect x="42.2" y="84.0" width="7.0" height="0.9" fill="#adadad"/><rect x="50.1" y="84.0" width="4.4" height="0.9" fill="#adadad"/><rect x="55.4" y="84.0" width="10.2" height="0.9" fill="#adadad"/><rect x="66.5" y="84.0" width="5.0" height="0.9" fill="#adadad"/><rect x="72.4" y="84.0" width="10.8" height="0.9" fill="#adadad"/><rect x="84.1" y="84.0" width="9.4" height="0.9" fill="#adadad"/><rect x="10.0" y="86.0" width="3.6" height="0.9" fill="#adadad"/><rect x="14.5" y="86.0" width="6.9" height="0.9" fill="#adadad"/><rect x="22.4" y="86.0" width="9.6" height="0.9" fill="#adadad"/><rect x="32.9" y="86.0" width="10.5" height="0.9" fill="#adadad"/><rect x="14.0" y="90.6" width="6.9" height="0.9" fill="#999"/><rect x="21.8" y="90.6" width="5.5" height="0.9" fill="#999"/><rect x="28.2" y="90.6" width="5.1" height="0.9" fill="#999"/><rect x="34.2" y="90.6" width="10.6" height="0.9" fill="#999"/><rect x="45.7" y="90.6" width="5.1" height="0.9" fill="#999"/><rect x="51.6" y="90.6" width="7.9" height="0.9" fill="#999"/><rect x="60.4" y="90.6" width="4.6" height="0.9" fill="#999"/><rect x="65.9" y="90.6" width="7.4" height="0.9" fill="#999"/><rect x="74.2" y="90.6" width="10.6" height="0.9" fill="#999"/><rect x="14.0" y="93.2" width="4.5" height="0.9" fill="#999"/><rect x="19.4" y="93.2" width="9.7" height="0.9" fill="#999"/><rect x="29.9" y="93.2" width="7.3" height="0.9" fill="#999"/><rect x="38.2" y="93.2" width="10.2" height="0.9" fill="#999"/><rect x="49.2" y="93.2" width="8.8" height="0.9" fill="#999"/><rect x="58.9" y="93.2" width="5.2" height="0.9" fill="#999"/><rect x="14.0" y="99.5" width="10.2" height="1.0" fill="#888"/><rect x="25.1" y="99.5" width="7.1" height="1.0" fill="#888"/><rect x="33.2" y="99.5" width="3.7" height="1.0" fill="#888"/><rect x="37.8" y="99.5" width="3.5" height="1.0" fill="#888"/><rect x="42.2" y="99.5" width="7.2" height="1.0" fill="#888"/><rect x="50.3" y="99.5" width="6.9" height="1.0" fill="#888"/><rect x="58.1" y="99.5" width="5.8" height="1.0" fill="#888"/><rect x="64.7" y="99.5" width="4.6" height="1.0" fill="#888"/><rect x="70.2" y="99.5" width="1.8" height="1.0" fill="#888"/><rect x="10.0" y="101.5" width="5.9" height="0.8" fill="#b8b8b8"/><rect x="16.8" y="101.5" width="9.8" height="0.8" fill="#b8b8b8"/><rect x="27.5" y="101.5" width="3.5" height="0.8" fill="#b8b8b8"/><rect x="31.9" y="101.5" width="9.1" height="0.8" fill="#b8b8b8"/><rect x="41.9" y="101.5" width="8.1" height="0.8" fill="#b8b8b8"/><rect x="10.0" y="103.7" width="4.4" height="0.8" fill="#b8b8b8"/><rect x="15.3" y="103.7" width="10.4" height="0.8" fill="#b8b8b8"/><rect x="26.6" y="103.7" width="8.8" height="0.8" fill="#b8b8b8"/><rect x="36.4" y="103.7" width="10.3" height="0.8" fill="#b8b8b8"/><rect x="47.6" y="103.7" width="2.4" height="0.8" fill="#b8b8b8"/><rect x="10.0" y="105.9" width="6.3" height="0.8" fill="#b8b8b8"/><rect x="17.2" y="105.9" width="6.4" height="0.8" fill="#b8b8b8"/><rect x="24.5" y="105.9" width="11.0" height="0.8" fill="#b8b8b8"/><rect x="36.4" y="105.9" width="7.9" height="0.8" fill="#b8b8b8"/><rect x="45.2" y="105.9" width="4.8" height="0.8" fill="#b8b8b8"/><rect x="10.0" y="108.1" width="6.7" height="0.8" fill="#b8b8b8"/><rect x="17.6" y="108.1" width="5.6" height="0.8" fill="#b8b8b8"/><rect x="24.1" y="108.1" width="3.9" height="0.8" fill="#b8b8b8"/><rect x="28.8" y="108.1" width="4.3" height="0.8" fill="#b8b8b8"/><rect x="34.0" y="108.1" width="9.8" height="0.8" fill="#b8b8b8"/><rect x="44.7" y="108.1" width="5.3" height="0.8" fill="#b8b8b8"/><rect x="10.0" y="110.3" width="10.5" height="0.8" fill="#b8b8b8"/><rect x="21.4" y="110.3" width="5.4" height="0.8" fill="#b8b8b8"/><rect x="27.7" y="110.3" width="5.5" height="0.8" fill="#b8b8b8"/><rect x="34.1" y="110.3" width="7.3" height="0.8" fill="#b8b8b8"/><rect x="42.3" y="110.3" width="4.9" height="0.8" fill="#b8b8b8"/><rect x="48.1" y="110.3" width="1.9" height="0.8" fill="#b8b8b8"/><rect x="10.0" y="112.5" width="10.7" height="0.8" fill="#b8b8b8"/><rect x="21.6" y="112.5" width="10.1" height="0.8" fill="#b8b8b8"/><rect x="32.6" y="112.5" width="9.6" height="0.8" fill="#b8b8b8"/><rect x="43.1" y="112.5" width="6.9" height="0.8" fill="#b8b8b8"/><rect x="10.0" y="114.7" width="10.4" height="0.8" fill="#b8b8b8"/><rect x="21.3" y="114.7" width="10.6" height="0.8" fill="#b8b8b8"/><rect x="32.7" y="114.7" width="7.6" height="0.8" fill="#b8b8b8"/><rect x="41.2" y="114.7" width="8.8" height="0.8" fill="#b8b8b8"/><rect x="10.0" y="116.9" width="3.9" height="0.8" fill="#b8b8b8"/><rect x="14.8" y="116.9" width="9.0" height="0.8" fill="#b8b8b8"/><rect x="24.7" y="116.9" width="6.9" height="0.8" fill="#b8b8b8"/><rect x="32.4" y="116.9" width="9.1" height="0.8" fill="#b8b8b8"/><rect x="42.5" y="116.9" width="7.5" height="0.8" fill="#b8b8b8"/><rect x="10.0" y="119.1" width="5.6" height="0.8" fill="#b8b8b8"/><rect x="16.5" y="119.1" width="3.9" height="0.8" fill="#b8b8b8"/><rect x="21.3" y="119.1" width="10.5" height="0.8" fill="#b8b8b8"/><rect x="32.7" y="119.1" width="4.5" height="0.8" fill="#b8b8b8"/><rect x="38.0" y="119.1" width="7.0" height="0.8" fill="#b8b8b8"/><rect x="46.0" y="119.1" width="4.0" height="0.8" fill="#b8b8b8"/><rect x="10.0" y="121.3" width="5.7" height="0.8" fill="#b8b8b8"/><rect x="16.6" y="121.3" width="9.0" height="0.8" fill="#b8b8b8"/><rect x="26.6" y="121.3" width="10.8" height="0.8" fill="#b8b8b8"/><rect x="38.3" y="121.3" width="5.5" height="0.8" fill="#b8b8b8"/><rect x="44.6" y="121.3" width="5.4" height="0.8" fill="#b8b8b8"/><rect x="55.0" y="101.5" width="5.8" height="0.8" fill="#b8b8b8"/><rect x="61.7" y="101.5" width="7.7" height="0.8" fill="#b8b8b8"/><rect x="70.2" y="101.5" width="6.5" height="0.8" fill="#b8b8b8"/><rect x="77.6" y="101.5" width="4.8" height="0.8" fill="#b8b8b8"/><rect x="83.2" y="101.5" width="4.7" height="0.8" fill="#b8b8b8"/><rect x="88.9" y="101.5" width="4.6" height="0.8" fill="#b8b8b8"/><rect x="55.0" y="103.7" width="10.3" height="0.8" fill="#b8b8b8"/><rect x="66.2" y="103.7" width="7.2" height="0.8" fill="#b8b8b8"/><rect x="74.3" y="103.7" width="5.2" height="0.8" fill="#b8b8b8"/><rect x="80.4" y="103.7" width="10.3" height="0.8" fill="#b8b8b8"/><rect x="91.6" y="103.7" width="1.9" height="0.8" fill="#b8b8b8"/><rect x="55.0" y="105.9" width="6.9" height="0.8" fill="#b8b8b8"/><rect x="62.8" y="105.9" width="4.5" height="0.8" fill="#b8b8b8"/><rect x="68.2" y="105.9" width="4.9" height="0.8" fill="#b8b8b8"/><rect x="74.1" y="105.9" width="4.2" height="0.8" fill="#b8b8b8"/><rect x="79.1" y="105.9" width="6.1" height="0.8" fill="#b8b8b8"/><rect x="86.1" y="105.9" width="4.2" height="0.8" fill="#b8b8b8"/><rect x="91.2" y="105.9" width="2.3" height="0.8" fill="#b8b8b8"/><rect x="55.0" y="108.1" width="5.4" height="0.8" fill="#b8b8b8"/><rect x="61.3" y="108.1" width="7.8" height="0.8" fill="#b8b8b8"/><rect x="70.0" y="108.1" width="10.2" height="0.8" fill="#b8b8b8"/><rect x="81.1" y="108.1" width="9.1" height="0.8" fill="#b8b8b8"/><rect x="91.1" y="108.1" width="2.4" height="0.8" fill="#b8b8b8"/><rect x="55.0" y="110.3" width="6.6" height="0.8" fill="#b8b8b8"/><rect x="62.5" y="110.3" width="7.4" height="0.8" fill="#b8b8b8"/><rect x="70.8" y="110.3" width="6.3" height="0.8" fill="#b8b8b8"/><rect x="78.1" y="110.3" width="6.0" height="0.8" fill="#b8b8b8"/><rect x="85.0" y="110.3" width="4.0" height="0.8" fill="#b8b8b8"/><rect x="89.9" y="110.3" width="3.6" height="0.8" fill="#b8b8b8"/><rect x="55.0" y="112.5" width="10.8" height="0.8" fill="#b8b8b8"/><rect x="66.7" y="112.5" width="4.4" height="0.8" fill="#b8b8b8"/><rect x="72.0" y="112.5" width="7.3" height="0.8" fill="#b8b8b8"/><rect x="80.2" y="112.5" width="8.2" height="0.8" fill="#b8b8b8"/><rect x="89.3" y="112.5" width="4.2" height="0.8" fill="#b8b8b8"/><rect x="55.0" y="114.7" width="5.1" height="0.8" fill="#b8b8b8"/><rect x="61.0" y="114.7" width="5.5" height="0.8" fill="#b8b8b8"/><rect x="67.5" y="114.7" width="5.4" height="0.8" fill="#b8b8b8"/><rect x="73.7" y="114.7" width="6.5" height="0.8" fill="#b8b8b8"/><rect x="81.1" y="114.7" width="6.8" height="0.8" fill="#b8b8b8"/><rect x="88.9" y="114.7" width="4.6" height="0.8" fill="#b8b8b8"/><rect x="55.0" y="116.9" width="9.9" height="0.8" fill="#b8b8b8"/><rect x="65.8" y="116.9" width="10.0" height="0.8" fill="#b8b8b8"/><rect x="76.7" y="116.9" width="3.7" height="0.8" fill="#b8b8b8"/><rect x="81.3" y="116.9" width="3.7" height="0.8" fill="#b8b8b8"/><rect x="85.9" y="116.9" width="7.6" height="0.8" fill="#b8b8b8"/><rect x="55.0" y="119.1" width="10.2" height="0.8" fill="#b8b8b8"/><rect x="66.1" y="119.1" width="7.0" height="0.8" fill="#b8b8b8"/><rect x="74.1" y="119.1" width="7.9" height="0.8" fill="#b8b8b8"/><rect x="82.9" y="119.1" width="3.5" height="0.8" fill="#b8b8b8"/><rect x="87.3" y="119.1" width="6.2" height="0.8" fill="#b8b8b8"/><rect x="55.0" y="121.3" width="10.5" height="0.8" fill="#b8b8b8"/><rect x="66.4" y="121.3" width="7.9" height="0.8" fill="#b8b8b8"/><rect x="10.0" y="127.5" width="9.9" height="0.8" fill="#aaa"/><rect x="20.8" y="127.5" width="10.8" height="0.8" fill="#aaa"/><rect x="32.5" y="127.5" width="5.4" height="0.8" fill="#aaa"/><rect x="38.8" y="127.5" width="1.2" height="0.8" fill="#aaa"/><rect x="58.0" y="127.5" width="4.7" height="0.8" fill="#aaa"/><rect x="63.6" y="127.5" width="7.4" height="0.8" fill="#aaa"/><rect x="71.9" y="127.5" width="8.6" height="0.8" fill="#aaa"/><rect x="81.4" y="127.5" width="10.6" height="0.8" fill="#aaa"/><rect x="10.0" y="130.5" width="8.9" height="0.8" fill="#bbb"/><rect x="19.8" y="130.5" width="8.4" height="0.8" fill="#bbb"/><rect x="29.1" y="130.5" width="9.2" height="0.8" fill="#bbb"/><rect x="39.2" y="130.5" width="6.9" height="0.8" fill="#bbb"/><rect x="47.0" y="130.5" width="7.6" height="0.8" fill="#bbb"/><rect x="55.6" y="130.5" width="3.8" height="0.8" fill="#bbb"/><rect x="60.3" y="130.5" width="9.4" height="0.8" fill="#bbb"/><rect x="70.5" y="130.5" width="5.2" height="0.8" fill="#bbb"/><rect x="76.7" y="130.5" width="10.4" height="0.8" fill="#bbb"/><rect x="88.0" y="130.5" width="2.0" height="0.8" fill="#bbb"/><rect x="36.0" y="133.5" width="5.8" height="0.8" fill="#aaa"/><rect x="42.7" y="133.5" width="4.5" height="0.8" fill="#aaa"/><rect x="48.0" y="133.5" width="5.4" height="0.8" fill="#aaa"/><rect x="54.3" y="133.5" width="7.7" height="0.8" fill="#aaa"/><rect x="2" y="62.5" width="6" height="22" fill="#222"/><rect x="3.5" y="65" width="3" height="3" fill="#bbb"/></svg><div class="pg">9p</div></div>
<div class="tt">AR1</div>
<div class="av"><svg width="24" height="24" viewBox="0 0 24 24"><circle cx="12" cy="12" r="11.5" fill="#dedee0" stroke="#d6d6da" stroke-width="1"/><ellipse cx="12" cy="9" rx="4.3" ry="5.6" fill="#fbfbfb"/><path d="M10 13 V15 Q6 16 5 22 Q12 25 19 22 Q18 16 14 15 V13 Z" fill="#fbfbfb"/></svg></div>
<div class="nm">Miracles</div>
<div class="lk"><svg width="11" height="11" viewBox="0 0 11 11"><path d="M1 5 H3 V10 H1 Z M3 5 L5.5 1 Q7 1 6.8 3 L6.5 4.5 H9.5 Q10.5 4.7 10.2 6 L9.3 9.3 Q9 10 8 10 H3" fill="none" stroke="#9a9a9a" stroke-width="0.9" stroke-linejoin="round"/></svg></div>
<div class="ct">1</div>
<div class="vw">12 Views</div>
<div class="bm"><svg width="14" height="15" viewBox="0 0 14 15"><path d="M1.4 3.8 Q1.4 1.2 4 1.2 H10 Q12.6 1.2 12.6 3.8 V13.2 L7 9.4 L1.4 13.2 Z" fill="none" stroke="#3a66c2" stroke-width="1.8" stroke-linejoin="round"/></svg></div>
</div>
<div class="card" style="left:653px">
<div class="th"><svg width="106" height="143" viewBox="0 0 106 143"><rect x="8.5" y="3.4" width="8.7" height="1.3" fill="#777"/><rect x="18.1" y="3.4" width="4.3" height="1.3" fill="#777"/><rect x="23.4" y="3.4" width="4.0" height="1.3" fill="#777"/><rect x="28.3" y="3.4" width="4.7" height="1.3" fill="#777"/><rect x="10.0" y="8.5" width="3.6" height="0.9" fill="#a0a0a0"/><rect x="15.0" y="8.5" width="6.4" height="0.8" fill="#c4c4c4"/><rect x="22.3" y="8.5" width="4.7" height="0.8" fill="#c4c4c4"/><rect x="10.0" y="11.1" width="3.6" height="0.9" fill="#a0a0a0"/><rect x="15.0" y="11.1" width="3.6" height="0.8" fill="#c4c4c4"/><rect x="19.5" y="11.1" width="5.8" height="0.8" fill="#c4c4c4"/><rect x="10.0" y="13.7" width="3.5" height="0.9" fill="#a0a0a0"/><rect x="15.0" y="13.7" width="10.7" height="0.8" fill="#c4c4c4"/><rect x="10.0" y="16.3" width="3.6" height="0.9" fill="#a0a0a0"/><rect x="15.0" y="16.3" width="10.1" height="0.8" fill="#c4c4c4"/><rect x="10.0" y="18.9" width="3.5" height="0.9" fill="#a0a0a0"/><rect x="15.0" y="18.9" width="5.3" height="0.8" fill="#c4c4c4"/><rect x="21.2" y="18.9" width="5.4" height="0.8" fill="#c4c4c4"/><rect x="10.0" y="21.5" width="4.0" height="0.9" fill="#a0a0a0"/><rect x="15.0" y="21.5" width="8.8" height="0.8" fill="#c4c4c4"/><rect x="24.7" y="21.5" width="2.3" height="0.8" fill="#c4c4c4"/><rect x="10.0" y="24.1" width="3.0" height="0.9" fill="#a0a0a0"/><rect x="15.0" y="24.1" width="7.2" height="0.8" fill="#c4c4c4"/><rect x="23.1" y="24.1" width="3.9" height="0.8" fill="#c4c4c4"/><rect x="32.0" y="8.5" width="6.7" height="0.9" fill="#aaa"/><rect x="39.6" y="8.5" width="5.4" height="0.9" fill="#aaa"/><rect x="45.9" y="8.5" width="8.5" height="0.9" fill="#aaa"/><rect x="55.3" y="8.5" width="10.4" height="0.9" fill="#aaa"/><rect x="66.6" y="8.5" width="5.2" height="0.9" fill="#aaa"/><rect x="72.7" y="8.5" width="3.8" height="0.9" fill="#aaa"/><rect x="77.4" y="8.5" width="6.0" height="0.9" fill="#aaa"/><rect x="84.3" y="8.5" width="5.4" height="0.9" fill="#aaa"/><rect x="32.0" y="10.8" width="8.6" height="0.9" fill="#aaa"/><rect x="41.5" y="10.8" width="5.0" height="0.9" fill="#aaa"/><rect x="47.4" y="10.8" width="9.5" height="0.9" fill="#aaa"/><rect x="57.8" y="10.8" width="9.0" height="0.9" fill="#aaa"/><rect x="67.7" y="10.8" width="7.3" height="0.9" fill="#aaa"/><rect x="75.9" y="10.8" width="5.0" height="0.9" fill="#aaa"/><rect x="81.9" y="10.8" width="7.8" height="0.9" fill="#aaa"/><rect x="32.0" y="13.1" width="5.8" height="0.9" fill="#aaa"/><rect x="38.7" y="13.1" width="9.7" height="0.9" fill="#aaa"/><rect x="49.3" y="13.1" width="5.2" height="0.9" fill="#aaa"/><rect x="55.4" y="13.1" width="5.2" height="0.9" fill="#aaa"/><rect x="61.5" y="13.1" width="9.2" height="0.9" fill="#aaa"/><rect x="71.6" y="13.1" width="5.7" height="0.9" fill="#aaa"/><rect x="78.2" y="13.1" width="10.6" height="0.9" fill="#aaa"/><rect x="32.0" y="19.0" width="7.2" height="0.9" fill="#b9d3c0"/><rect x="40.1" y="19.0" width="4.9" height="0.9" fill="#b9d3c0"/><rect x="45.9" y="19.0" width="5.2" height="0.9" fill="#b9d3c0"/><rect x="52.0" y="19.0" width="6.6" height="0.9" fill="#b9d3c0"/><rect x="59.5" y="19.0" width="8.5" height="0.9" fill="#b9d3c0"/><rect x="68.9" y="19.0" width="10.6" height="0.9" fill="#b9d3c0"/><rect x="80.4" y="19.0" width="4.6" height="0.9" fill="#b9d3c0"/><rect x="85.9" y="19.0" width="3.8" height="0.9" fill="#b9d3c0"/><rect x="32.0" y="21.3" width="5.1" height="0.9" fill="#b9d3c0"/><rect x="38.0" y="21.3" width="10.8" height="0.9" fill="#b9d3c0"/><rect x="49.7" y="21.3" width="4.6" height="0.9" fill="#b9d3c0"/><rect x="55.2" y="21.3" width="3.9" height="0.9" fill="#b9d3c0"/><rect x="60.0" y="21.3" width="4.0" height="0.9" fill="#b9d3c0"/><rect x="64.8" y="21.3" width="6.4" height="0.9" fill="#b9d3c0"/><rect x="72.2" y="21.3" width="10.2" height="0.9" fill="#b9d3c0"/><rect x="83.3" y="21.3" width="6.4" height="0.9" fill="#b9d3c0"/><rect x="32.0" y="23.6" width="9.0" height="0.9" fill="#b9d3c0"/><rect x="41.9" y="23.6" width="11.0" height="0.9" fill="#b9d3c0"/><rect x="53.8" y="23.6" width="10.5" height="0.9" fill="#b9d3c0"/><rect x="65.2" y="23.6" width="6.0" height="0.9" fill="#b9d3c0"/><rect x="72.0" y="23.6" width="4.9" height="0.9" fill="#b9d3c0"/><rect x="77.8" y="23.6" width="10.5" height="0.9" fill="#b9d3c0"/><rect x="32.0" y="25.9" width="9.1" height="0.9" fill="#b9d3c0"/><rect x="42.0" y="25.9" width="3.7" height="0.9" fill="#b9d3c0"/><rect x="46.6" y="25.9" width="8.5" height="0.9" fill="#b9d3c0"/><rect x="56.0" y="25.9" width="6.3" height="0.9" fill="#b9d3c0"/><rect x="63.3" y="25.9" width="6.3" height="0.9" fill="#b9d3c0"/><rect x="70.5" y="25.9" width="6.0" height="0.9" fill="#b9d3c0"/><rect x="77.4" y="25.9" width="4.8" height="0.9" fill="#b9d3c0"/><rect x="83.0" y="25.9" width="3.5" height="0.9" fill="#b9d3c0"/><rect x="87.4" y="25.9" width="2.3" height="0.9" fill="#b9d3c0"/><rect x="8.5" y="31.4" width="6.1" height="1.1" fill="#888"/><rect x="15.5" y="31.4" width="4.5" height="1.1" fill="#888"/><rect x="10.0" y="35.0" width="2.0" height="0.9" fill="#999"/><rect x="13.0" y="35.0" width="10.7" height="0.8" fill="#b2b2b2"/><rect x="24.6" y="35.0" width="5.1" height="0.8" fill="#b2b2b2"/><rect x="30.6" y="35.0" width="6.2" height="0.8" fill="#b2b2b2"/><rect x="37.7" y="35.0" width="9.7" height="0.8" fill="#b2b2b2"/><rect x="48.2" y="35.0" width="9.7" height="0.8" fill="#b2b2b2"/><rect x="58.8" y="35.0" width="6.7" height="0.8" fill="#b2b2b2"/><rect x="66.4" y="35.0" width="3.9" height="0.8" fill="#b2b2b2"/><rect x="71.2" y="35.0" width="7.1" height="0.8" fill="#b2b2b2"/><rect x="79.2" y="35.0" width="6.3" height="0.8" fill="#b2b2b2"/><rect x="86.3" y="35.0" width="10.4" height="0.8" fill="#b2b2b2"/><rect x="13.0" y="36.8" width="4.9" height="0.8" fill="#b2b2b2"/><rect x="18.8" y="36.8" width="6.2" height="0.8" fill="#b2b2b2"/><rect x="26.0" y="36.8" width="10.2" height="0.8" fill="#b2b2b2"/><rect x="37.1" y="36.8" width="1.6" height="0.8" fill="#b2b2b2"/><rect x="10.0" y="38.6" width="2.0" height="0.9" fill="#999"/><rect x="13.0" y="38.6" width="9.6" height="0.8" fill="#b2b2b2"/><rect x="23.5" y="38.6" width="9.3" height="0.8" fill="#b2b2b2"/><rect x="33.6" y="38.6" width="3.8" height="0.8" fill="#b2b2b2"/><rect x="38.3" y="38.6" width="3.8" height="0.8" fill="#b2b2b2"/><rect x="43.0" y="38.6" width="4.0" height="0.8" fill="#b2b2b2"/><rect x="47.9" y="38.6" width="10.4" height="0.8" fill="#b2b2b2"/><rect x="59.2" y="38.6" width="5.4" height="0.8" fill="#b2b2b2"/><rect x="65.5" y="38.6" width="9.1" height="0.8" fill="#b2b2b2"/><rect x="75.5" y="38.6" width="10.2" height="0.8" fill="#b2b2b2"/><rect x="86.6" y="38.6" width="6.0" height="0.8" fill="#b2b2b2"/><rect x="93.6" y="38.6" width="5.0" height="0.8" fill="#b2b2b2"/><rect x="13.0" y="40.4" width="10.7" height="0.8" fill="#b2b2b2"/><rect x="24.6" y="40.4" width="8.1" height="0.8" fill="#b2b2b2"/><rect x="33.6" y="40.4" width="5.1" height="0.8" fill="#b2b2b2"/><rect x="10.0" y="42.2" width="2.0" height="0.9" fill="#999"/><rect x="13.0" y="42.2" width="5.9" height="0.8" fill="#b2b2b2"/><rect x="19.8" y="42.2" width="5.6" height="0.8" fill="#b2b2b2"/><rect x="26.2" y="42.2" width="3.5" height="0.8" fill="#b2b2b2"/><rect x="30.7" y="42.2" width="9.2" height="0.8" fill="#b2b2b2"/><rect x="40.7" y="42.2" width="10.4" height="0.8" fill="#b2b2b2"/><rect x="52.0" y="42.2" width="8.3" height="0.8" fill="#b2b2b2"/><rect x="61.2" y="42.2" width="10.6" height="0.8" fill="#b2b2b2"/><rect x="72.6" y="42.2" width="3.7" height="0.8" fill="#b2b2b2"/><rect x="77.2" y="42.2" width="5.3" height="0.8" fill="#b2b2b2"/><rect x="83.4" y="42.2" width="7.1" height="0.8" fill="#b2b2b2"/><rect x="91.3" y="42.2" width="7.3" height="0.8" fill="#b2b2b2"/><rect x="13.0" y="44.0" width="10.7" height="0.8" fill="#b2b2b2"/><rect x="24.6" y="44.0" width="6.4" height="0.8" fill="#b2b2b2"/><rect x="31.9" y="44.0" width="5.4" height="0.8" fill="#b2b2b2"/><rect x="10.0" y="45.8" width="2.0" height="0.9" fill="#999"/><rect x="13.0" y="45.8" width="7.2" height="0.8" fill="#b2b2b2"/><rect x="21.1" y="45.8" width="10.5" height="0.8" fill="#b2b2b2"/><rect x="32.5" y="45.8" width="4.9" height="0.8" fill="#b2b2b2"/><rect x="38.2" y="45.8" width="9.5" height="0.8" fill="#b2b2b2"/><rect x="48.7" y="45.8" width="9.0" height="0.8" fill="#b2b2b2"/><rect x="58.6" y="45.8" width="9.7" height="0.8" fill="#b2b2b2"/><rect x="69.2" y="45.8" width="9.3" height="0.8" fill="#b2b2b2"/><rect x="79.4" y="45.8" width="8.1" height="0.8" fill="#b2b2b2"/><rect x="88.3" y="45.8" width="6.0" height="0.8" fill="#b2b2b2"/><rect x="95.2" y="45.8" width="3.4" height="0.8" fill="#b2b2b2"/><rect x="13.0" y="47.6" width="6.2" height="0.8" fill="#b2b2b2"/><rect x="20.1" y="47.6" width="9.4" height="0.8" fill="#b2b2b2"/><rect x="30.4" y="47.6" width="4.1" height="0.8" fill="#b2b2b2"/><rect x="35.4" y="47.6" width="3.3" height="0.8" fill="#b2b2b2"/><rect x="10.0" y="49.4" width="2.0" height="0.9" fill="#999"/><rect x="13.0" y="49.4" width="5.4" height="0.8" fill="#b2b2b2"/><rect x="19.3" y="49.4" width="4.0" height="0.8" fill="#b2b2b2"/><rect x="24.1" y="49.4" width="3.8" height="0.8" fill="#b2b2b2"/><rect x="28.8" y="49.4" width="7.6" height="0.8" fill="#b2b2b2"/><rect x="37.3" y="49.4" width="5.9" height="0.8" fill="#b2b2b2"/><rect x="44.2" y="49.4" width="10.9" height="0.8" fill="#b2b2b2"/><rect x="55.9" y="49.4" width="10.1" height="0.8" fill="#b2b2b2"/><rect x="67.0" y="49.4" width="10.9" height="0.8" fill="#b2b2b2"/><rect x="78.8" y="49.4" width="5.5" height="0.8" fill="#b2b2b2"/><rect x="85.2" y="49.4" width="4.1" height="0.8" fill="#b2b2b2"/><rect x="90.2" y="49.4" width="4.2" height="0.8" fill="#b2b2b2"/><rect x="95.3" y="49.4" width="3.3" height="0.8" fill="#b2b2b2"/><rect x="13.0" y="51.2" width="8.8" height="0.8" fill="#b2b2b2"/><rect x="22.7" y="51.2" width="6.9" height="0.8" fill="#b2b2b2"/><rect x="30.5" y="51.2" width="5.3" height="0.8" fill="#b2b2b2"/><rect x="36.6" y="51.2" width="2.0" height="0.8" fill="#b2b2b2"/><rect x="8.5" y="56.5" width="8.2" height="1.1" fill="#888"/><rect x="17.6" y="56.5" width="2.4" height="1.1" fill="#888"/><rect x="13.0" y="60.0" width="9.1" height="0.8" fill="#b2b2b2"/><rect x="23.0" y="60.0" width="9.9" height="0.8" fill="#b2b2b2"/><rect x="33.8" y="60.0" width="8.5" height="0.8" fill="#b2b2b2"/><rect x="43.1" y="60.0" width="4.4" height="0.8" fill="#b2b2b2"/><rect x="48.5" y="60.0" width="9.8" height="0.8" fill="#b2b2b2"/><rect x="59.2" y="60.0" width="5.7" height="0.8" fill="#b2b2b2"/><rect x="65.8" y="60.0" width="7.8" height="0.8" fill="#b2b2b2"/><rect x="74.4" y="60.0" width="6.3" height="0.8" fill="#b2b2b2"/><rect x="81.6" y="60.0" width="9.0" height="0.8" fill="#b2b2b2"/><rect x="91.5" y="60.0" width="5.0" height="0.8" fill="#b2b2b2"/><rect x="97.4" y="60.0" width="1.2" height="0.8" fill="#b2b2b2"/><rect x="13.0" y="62.3" width="5.3" height="0.8" fill="#b2b2b2"/><rect x="19.2" y="62.3" width="4.6" height="0.8" fill="#b2b2b2"/><rect x="24.8" y="62.3" width="10.1" height="0.8" fill="#b2b2b2"/><rect x="35.8" y="62.3" width="7.8" height="0.8" fill="#b2b2b2"/><rect x="44.6" y="62.3" width="5.9" height="0.8" fill="#b2b2b2"/><rect x="51.4" y="62.3" width="6.5" height="0.8" fill="#b2b2b2"/><rect x="58.8" y="62.3" width="10.9" height="0.8" fill="#b2b2b2"/><rect x="70.6" y="62.3" width="7.3" height="0.8" fill="#b2b2b2"/><rect x="78.8" y="62.3" width="5.2" height="0.8" fill="#b2b2b2"/><rect x="85.0" y="62.3" width="9.6" height="0.8" fill="#b2b2b2"/><rect x="95.4" y="62.3" width="3.2" height="0.8" fill="#b2b2b2"/><rect x="13.0" y="64.6" width="10.9" height="0.8" fill="#b2b2b2"/><rect x="24.8" y="64.6" width="4.3" height="0.8" fill="#b2b2b2"/><rect x="30.0" y="64.6" width="7.1" height="0.8" fill="#b2b2b2"/><rect x="38.0" y="64.6" width="9.6" height="0.8" fill="#b2b2b2"/><rect x="48.5" y="64.6" width="9.8" height="0.8" fill="#b2b2b2"/><rect x="59.2" y="64.6" width="10.4" height="0.8" fill="#b2b2b2"/><rect x="70.5" y="64.6" width="3.8" height="0.8" fill="#b2b2b2"/><rect x="75.2" y="64.6" width="5.7" height="0.8" fill="#b2b2b2"/><rect x="81.8" y="64.6" width="4.4" height="0.8" fill="#b2b2b2"/><rect x="87.1" y="64.6" width="4.9" height="0.8" fill="#b2b2b2"/><rect x="92.9" y="64.6" width="5.7" height="0.8" fill="#b2b2b2"/><rect x="13.0" y="66.9" width="7.9" height="0.8" fill="#b2b2b2"/><rect x="21.8" y="66.9" width="10.5" height="0.8" fill="#b2b2b2"/><rect x="33.2" y="66.9" width="6.3" height="0.8" fill="#b2b2b2"/><rect x="40.3" y="66.9" width="10.0" height="0.8" fill="#b2b2b2"/><rect x="51.2" y="66.9" width="6.9" height="0.8" fill="#b2b2b2"/><rect x="59.0" y="66.9" width="5.4" height="0.8" fill="#b2b2b2"/><rect x="8.5" y="73.0" width="9.3" height="1.1" fill="#888"/><rect x="8.6" y="76.0" width="10.6" height="0.8" fill="#b2b2b2"/><rect x="20.1" y="76.0" width="4.3" height="0.8" fill="#b2b2b2"/><rect x="25.3" y="76.0" width="8.0" height="0.8" fill="#b2b2b2"/><rect x="34.2" y="76.0" width="8.1" height="0.8" fill="#b2b2b2"/><rect x="43.2" y="76.0" width="5.1" height="0.8" fill="#b2b2b2"/><rect x="49.2" y="76.0" width="6.3" height="0.8" fill="#b2b2b2"/><rect x="56.4" y="76.0" width="4.6" height="0.8" fill="#b2b2b2"/><rect x="61.9" y="76.0" width="5.0" height="0.8" fill="#b2b2b2"/><rect x="67.8" y="76.0" width="5.4" height="0.8" fill="#b2b2b2"/><rect x="74.1" y="76.0" width="8.0" height="0.8" fill="#b2b2b2"/><rect x="83.0" y="76.0" width="8.4" height="0.8" fill="#b2b2b2"/><rect x="92.3" y="76.0" width="5.0" height="0.8" fill="#b2b2b2"/><rect x="8.6" y="78.3" width="3.6" height="0.8" fill="#b2b2b2"/><rect x="13.1" y="78.3" width="6.0" height="0.8" fill="#b2b2b2"/><rect x="19.9" y="78.3" width="8.6" height="0.8" fill="#b2b2b2"/><rect x="29.4" y="78.3" width="4.9" height="0.8" fill="#b2b2b2"/><rect x="35.2" y="78.3" width="5.8" height="0.8" fill="#b2b2b2"/><rect x="42.0" y="78.3" width="5.0" height="0.8" fill="#b2b2b2"/><rect x="47.9" y="78.3" width="9.5" height="0.8" fill="#b2b2b2"/><rect x="58.2" y="78.3" width="7.6" height="0.8" fill="#b2b2b2"/><rect x="66.8" y="78.3" width="4.0" height="0.8" fill="#b2b2b2"/><rect x="8.6" y="82.5" width="4.3" height="0.8" fill="#b2b2b2"/><rect x="13.8" y="82.5" width="6.5" height="0.8" fill="#b2b2b2"/><rect x="21.1" y="82.5" width="7.6" height="0.8" fill="#b2b2b2"/><rect x="29.7" y="82.5" width="8.3" height="0.8" fill="#b2b2b2"/><rect x="38.8" y="82.5" width="4.2" height="0.8" fill="#b2b2b2"/><rect x="43.9" y="82.5" width="4.7" height="0.8" fill="#b2b2b2"/><rect x="49.6" y="82.5" width="8.7" height="0.8" fill="#b2b2b2"/><rect x="59.2" y="82.5" width="6.6" height="0.8" fill="#b2b2b2"/><rect x="66.6" y="82.5" width="5.6" height="0.8" fill="#b2b2b2"/><rect x="73.2" y="82.5" width="5.8" height="0.8" fill="#b2b2b2"/><rect x="79.9" y="82.5" width="10.6" height="0.8" fill="#b2b2b2"/><rect x="91.4" y="82.5" width="5.8" height="0.8" fill="#b2b2b2"/><rect x="8.6" y="84.8" width="7.7" height="0.8" fill="#b2b2b2"/><rect x="17.2" y="84.8" width="6.2" height="0.8" fill="#b2b2b2"/><rect x="24.3" y="84.8" width="6.6" height="0.8" fill="#b2b2b2"/><rect x="31.9" y="84.8" width="10.0" height="0.8" fill="#b2b2b2"/><rect x="42.7" y="84.8" width="11.0" height="0.8" fill="#b2b2b2"/><rect x="54.6" y="84.8" width="6.2" height="0.8" fill="#b2b2b2"/><rect x="61.7" y="84.8" width="5.0" height="0.8" fill="#b2b2b2"/><rect x="67.6" y="84.8" width="9.0" height="0.8" fill="#b2b2b2"/><rect x="77.5" y="84.8" width="5.0" height="0.8" fill="#b2b2b2"/><rect x="83.4" y="84.8" width="3.5" height="0.8" fill="#b2b2b2"/><rect x="87.8" y="84.8" width="10.3" height="0.8" fill="#b2b2b2"/><rect x="8.6" y="87.1" width="6.7" height="0.8" fill="#b2b2b2"/><rect x="16.2" y="87.1" width="9.7" height="0.8" fill="#b2b2b2"/><rect x="26.7" y="87.1" width="6.5" height="0.8" fill="#b2b2b2"/><rect x="34.2" y="87.1" width="10.1" height="0.8" fill="#b2b2b2"/><rect x="45.2" y="87.1" width="7.0" height="0.8" fill="#b2b2b2"/><rect x="8.6" y="92.0" width="4.7" height="0.8" fill="#b2b2b2"/><rect x="14.2" y="92.0" width="3.6" height="0.8" fill="#b2b2b2"/><rect x="18.7" y="92.0" width="7.6" height="0.8" fill="#b2b2b2"/><rect x="27.3" y="92.0" width="8.3" height="0.8" fill="#b2b2b2"/><rect x="36.5" y="92.0" width="10.3" height="0.8" fill="#b2b2b2"/><rect x="47.7" y="92.0" width="4.2" height="0.8" fill="#b2b2b2"/><rect x="52.8" y="92.0" width="8.2" height="0.8" fill="#b2b2b2"/><rect x="61.8" y="92.0" width="6.3" height="0.8" fill="#b2b2b2"/><rect x="69.0" y="92.0" width="7.3" height="0.8" fill="#b2b2b2"/><rect x="77.2" y="92.0" width="4.6" height="0.8" fill="#b2b2b2"/><rect x="82.7" y="92.0" width="5.6" height="0.8" fill="#b2b2b2"/><rect x="89.2" y="92.0" width="7.4" height="0.8" fill="#b2b2b2"/><rect x="8.6" y="94.3" width="10.4" height="0.8" fill="#b2b2b2"/><rect x="19.9" y="94.3" width="4.3" height="0.8" fill="#b2b2b2"/><rect x="25.2" y="94.3" width="7.2" height="0.8" fill="#b2b2b2"/><rect x="33.2" y="94.3" width="9.5" height="0.8" fill="#b2b2b2"/><rect x="43.7" y="94.3" width="10.8" height="0.8" fill="#b2b2b2"/><rect x="55.3" y="94.3" width="5.0" height="0.8" fill="#b2b2b2"/><rect x="61.2" y="94.3" width="1.3" height="0.8" fill="#b2b2b2"/><rect x="8.6" y="99.0" width="10.6" height="0.8" fill="#b2b2b2"/><rect x="20.1" y="99.0" width="10.8" height="0.8" fill="#b2b2b2"/><rect x="31.8" y="99.0" width="7.1" height="0.8" fill="#b2b2b2"/><rect x="39.8" y="99.0" width="3.9" height="0.8" fill="#b2b2b2"/><rect x="44.6" y="99.0" width="10.4" height="0.8" fill="#b2b2b2"/><rect x="56.0" y="99.0" width="6.4" height="0.8" fill="#b2b2b2"/><rect x="63.3" y="99.0" width="6.7" height="0.8" fill="#b2b2b2"/><rect x="8.6" y="102.5" width="11" height="1.2" fill="#d9a0a0"/><rect x="8.6" y="106.0" width="8.2" height="0.8" fill="#b2b2b2"/><rect x="17.7" y="106.0" width="9.7" height="0.8" fill="#b2b2b2"/><rect x="28.2" y="106.0" width="4.7" height="0.8" fill="#b2b2b2"/><rect x="33.8" y="106.0" width="9.4" height="0.8" fill="#b2b2b2"/><rect x="44.1" y="106.0" width="5.2" height="0.8" fill="#b2b2b2"/><rect x="50.2" y="106.0" width="6.5" height="0.8" fill="#b2b2b2"/><rect x="57.6" y="106.0" width="9.8" height="0.8" fill="#b2b2b2"/><rect x="68.4" y="106.0" width="9.7" height="0.8" fill="#b2b2b2"/><rect x="79.0" y="106.0" width="4.9" height="0.8" fill="#b2b2b2"/><rect x="84.8" y="106.0" width="5.1" height="0.8" fill="#b2b2b2"/><rect x="90.8" y="106.0" width="6.5" height="0.8" fill="#b2b2b2"/><rect x="8.6" y="108.3" width="7.4" height="0.8" fill="#b2b2b2"/><rect x="16.9" y="108.3" width="6.4" height="0.8" fill="#b2b2b2"/><rect x="24.2" y="108.3" width="4.4" height="0.8" fill="#b2b2b2"/><rect x="29.5" y="108.3" width="5.4" height="0.8" fill="#b2b2b2"/><rect x="35.7" y="108.3" width="8.9" height="0.8" fill="#b2b2b2"/><rect x="45.6" y="108.3" width="10.2" height="0.8" fill="#b2b2b2"/><rect x="56.7" y="108.3" width="3.8" height="0.8" fill="#b2b2b2"/><rect x="61.4" y="108.3" width="7.7" height="0.8" fill="#b2b2b2"/><rect x="70.0" y="108.3" width="9.2" height="0.8" fill="#b2b2b2"/><rect x="80.1" y="108.3" width="3.8" height="0.8" fill="#b2b2b2"/><rect x="84.8" y="108.3" width="9.8" height="0.8" fill="#b2b2b2"/><rect x="95.5" y="108.3" width="2.9" height="0.8" fill="#b2b2b2"/><rect x="8.6" y="110.6" width="8.0" height="0.8" fill="#b2b2b2"/><rect x="8.6" y="116.0" width="7.6" height="1.0" fill="#999"/><rect x="17.1" y="116.0" width="8.2" height="1.0" fill="#999"/><rect x="26.2" y="116.0" width="5.8" height="1.0" fill="#999"/><rect x="32.9" y="116.0" width="6.7" height="1.0" fill="#999"/><rect x="40.5" y="116.0" width="4.5" height="1.0" fill="#999"/><rect x="8.6" y="119.5" width="6.7" height="0.8" fill="#b2b2b2"/><rect x="16.2" y="119.5" width="8.4" height="0.8" fill="#b2b2b2"/><rect x="25.5" y="119.5" width="6.9" height="0.8" fill="#b2b2b2"/><rect x="33.3" y="119.5" width="6.8" height="0.8" fill="#b2b2b2"/><rect x="41.0" y="119.5" width="3.7" height="0.8" fill="#b2b2b2"/><rect x="45.5" y="119.5" width="8.1" height="0.8" fill="#b2b2b2"/><rect x="54.6" y="119.5" width="7.2" height="0.8" fill="#b2b2b2"/><rect x="62.7" y="119.5" width="5.3" height="0.8" fill="#b2b2b2"/><rect x="68.8" y="119.5" width="9.2" height="0.8" fill="#b2b2b2"/><rect x="79.0" y="119.5" width="9.3" height="0.8" fill="#b2b2b2"/><rect x="89.2" y="119.5" width="6.9" height="0.8" fill="#b2b2b2"/><rect x="97.0" y="119.5" width="1.4" height="0.8" fill="#b2b2b2"/><rect x="8.6" y="122.1" width="7.0" height="0.8" fill="#b2b2b2"/><rect x="16.5" y="122.1" width="4.3" height="0.8" fill="#b2b2b2"/><rect x="21.8" y="122.1" width="4.5" height="0.8" fill="#b2b2b2"/><rect x="27.1" y="122.1" width="6.7" height="0.8" fill="#b2b2b2"/><rect x="34.7" y="122.1" width="4.2" height="0.8" fill="#b2b2b2"/><rect x="39.8" y="122.1" width="6.8" height="0.8" fill="#b2b2b2"/><rect x="47.5" y="122.1" width="7.3" height="0.8" fill="#b2b2b2"/><rect x="55.8" y="122.1" width="3.8" height="0.8" fill="#b2b2b2"/><rect x="60.5" y="122.1" width="8.3" height="0.8" fill="#b2b2b2"/><rect x="69.7" y="122.1" width="4.1" height="0.8" fill="#b2b2b2"/><rect x="74.7" y="122.1" width="9.0" height="0.8" fill="#b2b2b2"/><rect x="84.6" y="122.1" width="9.3" height="0.8" fill="#b2b2b2"/><rect x="94.8" y="122.1" width="3.6" height="0.8" fill="#b2b2b2"/><rect x="13.0" y="126.0" width="3.9" height="0.8" fill="#b2b2b2"/><rect x="17.8" y="126.0" width="7.3" height="0.8" fill="#b2b2b2"/><rect x="26.0" y="126.0" width="6.3" height="0.8" fill="#b2b2b2"/><rect x="33.2" y="126.0" width="10.6" height="0.8" fill="#b2b2b2"/><rect x="44.8" y="126.0" width="4.5" height="0.8" fill="#b2b2b2"/><rect x="50.2" y="126.0" width="9.9" height="0.8" fill="#b2b2b2"/><rect x="61.0" y="126.0" width="11.0" height="0.8" fill="#b2b2b2"/><rect x="72.9" y="126.0" width="9.0" height="0.8" fill="#b2b2b2"/><rect x="82.8" y="126.0" width="9.6" height="0.8" fill="#b2b2b2"/><rect x="93.3" y="126.0" width="5.0" height="0.8" fill="#b2b2b2"/><rect x="13.0" y="128.6" width="10.9" height="0.8" fill="#b2b2b2"/><rect x="24.8" y="128.6" width="7.2" height="0.8" fill="#b2b2b2"/><rect x="32.9" y="128.6" width="10.7" height="0.8" fill="#b2b2b2"/><rect x="44.4" y="128.6" width="10.4" height="0.8" fill="#b2b2b2"/><rect x="55.7" y="128.6" width="4.7" height="0.8" fill="#b2b2b2"/><rect x="61.3" y="128.6" width="2.9" height="0.8" fill="#b2b2b2"/><rect x="13.0" y="132.0" width="10.5" height="0.8" fill="#b2b2b2"/><rect x="24.4" y="132.0" width="4.0" height="0.8" fill="#b2b2b2"/><rect x="29.3" y="132.0" width="6.1" height="0.8" fill="#b2b2b2"/><rect x="36.3" y="132.0" width="9.2" height="0.8" fill="#b2b2b2"/><rect x="46.4" y="132.0" width="4.7" height="0.8" fill="#b2b2b2"/><rect x="52.0" y="132.0" width="10.2" height="0.8" fill="#b2b2b2"/><rect x="63.1" y="132.0" width="5.6" height="0.8" fill="#b2b2b2"/><rect x="69.6" y="132.0" width="9.6" height="0.8" fill="#b2b2b2"/><rect x="80.1" y="132.0" width="4.6" height="0.8" fill="#b2b2b2"/><rect x="85.5" y="132.0" width="7.3" height="0.8" fill="#b2b2b2"/><rect x="93.7" y="132.0" width="4.7" height="0.8" fill="#b2b2b2"/><rect x="13.0" y="134.6" width="5.1" height="0.8" fill="#b2b2b2"/><rect x="19.0" y="134.6" width="5.5" height="0.8" fill="#b2b2b2"/><rect x="25.3" y="134.6" width="7.3" height="0.8" fill="#b2b2b2"/><rect x="33.5" y="134.6" width="5.9" height="0.8" fill="#b2b2b2"/><rect x="40.3" y="134.6" width="3.8" height="0.8" fill="#b2b2b2"/><rect x="45.0" y="134.6" width="2.2" height="0.8" fill="#b2b2b2"/><rect x="93.6" y="138.4" width="4.8" height="1" fill="#666"/></svg><div class="pg">1p</div></div>
<div class="tt">LEISHMANIA SPP</div>
<div class="av"><svg width="24" height="24" viewBox="0 0 24 24"><circle cx="12" cy="12" r="11.5" fill="#dedee0" stroke="#d6d6da" stroke-width="1"/><ellipse cx="12" cy="9" rx="4.3" ry="5.6" fill="#fbfbfb"/><path d="M10 13 V15 Q6 16 5 22 Q12 25 19 22 Q18 16 14 15 V13 Z" fill="#fbfbfb"/></svg></div>
<div class="nm">Ayrton Martin...</div>
<div class="lk"><svg width="11" height="11" viewBox="0 0 11 11"><path d="M1 5 H3 V10 H1 Z M3 5 L5.5 1 Q7 1 6.8 3 L6.5 4.5 H9.5 Q10.5 4.7 10.2 6 L9.3 9.3 Q9 10 8 10 H3" fill="none" stroke="#9a9a9a" stroke-width="0.9" stroke-linejoin="round"/></svg></div>
<div class="ct">1</div>
<div class="vw">8 Views</div>
<div class="bm"><svg width="14" height="15" viewBox="0 0 14 15"><path d="M1.4 3.8 Q1.4 1.2 4 1.2 H10 Q12.6 1.2 12.6 3.8 V13.2 L7 9.4 L1.4 13.2 Z" fill="none" stroke="#3a66c2" stroke-width="1.8" stroke-linejoin="round"/></svg></div>
</div>
<div class="card" style="left:793px">
<div class="th"><svg width="106" height="143" viewBox="0 0 106 143"><circle cx="14" cy="8.5" r="2.6" fill="none" stroke="#777" stroke-width="0.8"/><rect x="18" y="7" width="12" height="2.2" fill="#888"/><rect x="14.0" y="15.0" width="4.0" height="1.3" fill="#666"/><rect x="19.2" y="15.0" width="8.6" height="1.3" fill="#666"/><rect x="29.0" y="15.0" width="7.1" height="1.3" fill="#666"/><rect x="37.3" y="15.0" width="8.4" height="1.3" fill="#666"/><rect x="46.8" y="15.0" width="4.0" height="1.3" fill="#666"/><rect x="52.0" y="15.0" width="7.7" height="1.3" fill="#666"/><rect x="61.0" y="15.0" width="3.7" height="1.3" fill="#666"/><rect x="65.8" y="15.0" width="6.2" height="1.3" fill="#666"/><rect x="73.2" y="15.0" width="6.8" height="1.3" fill="#666"/><rect x="81.3" y="15.0" width="5.2" height="1.3" fill="#666"/><rect x="87.6" y="15.0" width="5.4" height="1.3" fill="#666"/><rect x="35.0" y="19.5" width="6.3" height="1.3" fill="#666"/><rect x="42.5" y="19.5" width="6.5" height="1.3" fill="#666"/><rect x="50.2" y="19.5" width="8.3" height="1.3" fill="#666"/><rect x="59.7" y="19.5" width="3.6" height="1.3" fill="#666"/><rect x="64.5" y="19.5" width="7.5" height="1.3" fill="#666"/><rect x="11.0" y="22.2" width="86.0" height="2.4" fill="#f2f03a"/><rect x="11.0" y="23.0" width="8.2" height="0.8" fill="#a8a8a0"/><rect x="20.1" y="23.0" width="6.5" height="0.8" fill="#a8a8a0"/><rect x="27.5" y="23.0" width="9.5" height="0.8" fill="#a8a8a0"/><rect x="37.9" y="23.0" width="5.5" height="0.8" fill="#a8a8a0"/><rect x="44.2" y="23.0" width="10.9" height="0.8" fill="#a8a8a0"/><rect x="56.1" y="23.0" width="7.8" height="0.8" fill="#a8a8a0"/><rect x="64.8" y="23.0" width="6.2" height="0.8" fill="#a8a8a0"/><rect x="71.9" y="23.0" width="9.2" height="0.8" fill="#a8a8a0"/><rect x="82.0" y="23.0" width="6.8" height="0.8" fill="#a8a8a0"/><rect x="89.8" y="23.0" width="4.8" height="0.8" fill="#a8a8a0"/><rect x="95.5" y="23.0" width="1.5" height="0.8" fill="#a8a8a0"/><rect x="11.0" y="24.6" width="47.0" height="2.4" fill="#f2f03a"/><rect x="11.0" y="25.4" width="3.9" height="0.8" fill="#a8a8a0"/><rect x="15.8" y="25.4" width="9.6" height="0.8" fill="#a8a8a0"/><rect x="26.3" y="25.4" width="5.4" height="0.8" fill="#a8a8a0"/><rect x="32.6" y="25.4" width="8.3" height="0.8" fill="#a8a8a0"/><rect x="41.8" y="25.4" width="10.9" height="0.8" fill="#a8a8a0"/><rect x="53.6" y="25.4" width="4.4" height="0.8" fill="#a8a8a0"/><rect x="11.0" y="31.0" width="8.5" height="0.8" fill="#a8a8a0"/><rect x="20.4" y="31.0" width="5.8" height="0.8" fill="#a8a8a0"/><rect x="27.1" y="31.0" width="3.5" height="0.8" fill="#a8a8a0"/><rect x="31.5" y="31.0" width="3.8" height="0.8" fill="#a8a8a0"/><rect x="36.2" y="31.0" width="4.6" height="0.8" fill="#a8a8a0"/><rect x="41.7" y="31.0" width="8.1" height="0.8" fill="#a8a8a0"/><rect x="50.7" y="31.0" width="6.7" height="0.8" fill="#a8a8a0"/><rect x="58.4" y="31.0" width="7.3" height="0.8" fill="#a8a8a0"/><rect x="66.6" y="31.0" width="10.2" height="0.8" fill="#a8a8a0"/><rect x="77.7" y="31.0" width="4.5" height="0.8" fill="#a8a8a0"/><rect x="83.1" y="31.0" width="5.2" height="0.8" fill="#a8a8a0"/><rect x="89.2" y="31.0" width="7.8" height="0.8" fill="#a8a8a0"/><rect x="11.0" y="33.4" width="3.7" height="0.8" fill="#a8a8a0"/><rect x="15.6" y="33.4" width="3.5" height="0.8" fill="#a8a8a0"/><rect x="20.0" y="33.4" width="6.2" height="0.8" fill="#a8a8a0"/><rect x="27.0" y="33.4" width="4.3" height="0.8" fill="#a8a8a0"/><rect x="32.2" y="33.4" width="6.2" height="0.8" fill="#a8a8a0"/><rect x="39.3" y="33.4" width="5.2" height="0.8" fill="#a8a8a0"/><rect x="45.4" y="33.4" width="7.9" height="0.8" fill="#a8a8a0"/><rect x="54.2" y="33.4" width="7.9" height="0.8" fill="#a8a8a0"/><rect x="63.0" y="33.4" width="5.0" height="0.8" fill="#a8a8a0"/><rect x="68.9" y="33.4" width="8.2" height="0.8" fill="#a8a8a0"/><rect x="78.0" y="33.4" width="7.1" height="0.8" fill="#a8a8a0"/><rect x="86.0" y="33.4" width="4.5" height="0.8" fill="#a8a8a0"/><rect x="91.4" y="33.4" width="5.6" height="0.8" fill="#a8a8a0"/><rect x="84.6" y="35.0" width="12.4" height="2.4" fill="#f2f03a"/><rect x="11.0" y="35.8" width="5.3" height="0.8" fill="#a8a8a0"/><rect x="17.2" y="35.8" width="4.6" height="0.8" fill="#a8a8a0"/><rect x="22.7" y="35.8" width="4.2" height="0.8" fill="#a8a8a0"/><rect x="27.9" y="35.8" width="8.3" height="0.8" fill="#a8a8a0"/><rect x="37.1" y="35.8" width="10.0" height="0.8" fill="#a8a8a0"/><rect x="48.0" y="35.8" width="9.4" height="0.8" fill="#a8a8a0"/><rect x="58.3" y="35.8" width="6.5" height="0.8" fill="#a8a8a0"/><rect x="65.7" y="35.8" width="5.5" height="0.8" fill="#a8a8a0"/><rect x="72.0" y="35.8" width="3.6" height="0.8" fill="#a8a8a0"/><rect x="76.5" y="35.8" width="8.3" height="0.8" fill="#a8a8a0"/><rect x="85.8" y="35.8" width="7.7" height="0.8" fill="#a8a8a0"/><rect x="94.4" y="35.8" width="2.6" height="0.8" fill="#a8a8a0"/><rect x="11.0" y="37.4" width="86.0" height="2.4" fill="#f2f03a"/><rect x="11.0" y="38.2" width="8.3" height="0.8" fill="#a8a8a0"/><rect x="20.2" y="38.2" width="6.8" height="0.8" fill="#a8a8a0"/><rect x="28.0" y="38.2" width="10.5" height="0.8" fill="#a8a8a0"/><rect x="39.4" y="38.2" width="9.0" height="0.8" fill="#a8a8a0"/><rect x="49.3" y="38.2" width="5.4" height="0.8" fill="#a8a8a0"/><rect x="55.6" y="38.2" width="10.3" height="0.8" fill="#a8a8a0"/><rect x="66.7" y="38.2" width="3.8" height="0.8" fill="#a8a8a0"/><rect x="71.5" y="38.2" width="7.5" height="0.8" fill="#a8a8a0"/><rect x="79.9" y="38.2" width="6.5" height="0.8" fill="#a8a8a0"/><rect x="87.3" y="38.2" width="5.3" height="0.8" fill="#a8a8a0"/><rect x="93.5" y="38.2" width="3.5" height="0.8" fill="#a8a8a0"/><rect x="11.0" y="39.8" width="72.0" height="2.4" fill="#f2f03a"/><rect x="11.0" y="40.6" width="9.3" height="0.8" fill="#a8a8a0"/><rect x="21.2" y="40.6" width="3.6" height="0.8" fill="#a8a8a0"/><rect x="25.7" y="40.6" width="7.6" height="0.8" fill="#a8a8a0"/><rect x="34.3" y="40.6" width="10.6" height="0.8" fill="#a8a8a0"/><rect x="45.7" y="40.6" width="4.6" height="0.8" fill="#a8a8a0"/><rect x="51.2" y="40.6" width="5.0" height="0.8" fill="#a8a8a0"/><rect x="57.1" y="40.6" width="8.1" height="0.8" fill="#a8a8a0"/><rect x="66.0" y="40.6" width="7.3" height="0.8" fill="#a8a8a0"/><rect x="74.2" y="40.6" width="8.3" height="0.8" fill="#a8a8a0"/><rect x="83.5" y="40.6" width="9.6" height="0.8" fill="#a8a8a0"/><rect x="94.0" y="40.6" width="3.0" height="0.8" fill="#a8a8a0"/><rect x="11.0" y="43.2" width="5.8" height="0.8" fill="#a8a8a0"/><rect x="17.7" y="43.2" width="5.8" height="0.8" fill="#a8a8a0"/><rect x="24.4" y="43.2" width="3.9" height="0.8" fill="#a8a8a0"/><rect x="29.1" y="43.2" width="10.2" height="0.8" fill="#a8a8a0"/><rect x="11.0" y="50.0" width="9.4" height="0.8" fill="#a8a8a0"/><rect x="21.3" y="50.0" width="8.9" height="0.8" fill="#a8a8a0"/><rect x="31.0" y="50.0" width="3.5" height="0.8" fill="#a8a8a0"/><rect x="35.5" y="50.0" width="9.8" height="0.8" fill="#a8a8a0"/><rect x="46.2" y="50.0" width="9.1" height="0.8" fill="#a8a8a0"/><rect x="56.2" y="50.0" width="7.0" height="0.8" fill="#a8a8a0"/><rect x="64.1" y="50.0" width="9.1" height="0.8" fill="#a8a8a0"/><rect x="74.1" y="50.0" width="6.9" height="0.8" fill="#a8a8a0"/><rect x="81.9" y="50.0" width="5.2" height="0.8" fill="#a8a8a0"/><rect x="87.9" y="50.0" width="4.3" height="0.8" fill="#a8a8a0"/><rect x="93.1" y="50.0" width="3.9" height="0.8" fill="#a8a8a0"/><rect x="69.8" y="51.6" width="27.2" height="2.4" fill="#f2f03a"/><rect x="11.0" y="52.4" width="3.8" height="0.8" fill="#a8a8a0"/><rect x="15.7" y="52.4" width="6.0" height="0.8" fill="#a8a8a0"/><rect x="22.6" y="52.4" width="9.1" height="0.8" fill="#a8a8a0"/><rect x="32.6" y="52.4" width="8.7" height="0.8" fill="#a8a8a0"/><rect x="42.2" y="52.4" width="9.8" height="0.8" fill="#a8a8a0"/><rect x="53.0" y="52.4" width="8.8" height="0.8" fill="#a8a8a0"/><rect x="62.7" y="52.4" width="5.5" height="0.8" fill="#a8a8a0"/><rect x="69.1" y="52.4" width="7.7" height="0.8" fill="#a8a8a0"/><rect x="77.7" y="52.4" width="6.8" height="0.8" fill="#a8a8a0"/><rect x="85.3" y="52.4" width="9.4" height="0.8" fill="#a8a8a0"/><rect x="95.7" y="52.4" width="1.3" height="0.8" fill="#a8a8a0"/><rect x="11.0" y="54.0" width="86.0" height="2.4" fill="#f2f03a"/><rect x="11.0" y="54.8" width="5.5" height="0.8" fill="#a8a8a0"/><rect x="17.4" y="54.8" width="8.3" height="0.8" fill="#a8a8a0"/><rect x="26.6" y="54.8" width="10.7" height="0.8" fill="#a8a8a0"/><rect x="38.2" y="54.8" width="5.1" height="0.8" fill="#a8a8a0"/><rect x="44.3" y="54.8" width="10.1" height="0.8" fill="#a8a8a0"/><rect x="55.3" y="54.8" width="3.6" height="0.8" fill="#a8a8a0"/><rect x="59.8" y="54.8" width="5.5" height="0.8" fill="#a8a8a0"/><rect x="66.1" y="54.8" width="5.3" height="0.8" fill="#a8a8a0"/><rect x="72.3" y="54.8" width="9.1" height="0.8" fill="#a8a8a0"/><rect x="82.3" y="54.8" width="10.6" height="0.8" fill="#a8a8a0"/><rect x="93.8" y="54.8" width="3.2" height="0.8" fill="#a8a8a0"/><rect x="11.0" y="56.4" width="11.6" height="2.4" fill="#f2f03a"/><rect x="11.0" y="57.2" width="6.0" height="0.8" fill="#a8a8a0"/><rect x="17.9" y="57.2" width="10.1" height="0.8" fill="#a8a8a0"/><rect x="28.9" y="57.2" width="6.0" height="0.8" fill="#a8a8a0"/><rect x="35.7" y="57.2" width="5.3" height="0.8" fill="#a8a8a0"/><rect x="41.9" y="57.2" width="3.1" height="0.8" fill="#a8a8a0"/><rect x="11.0" y="65.0" width="6.8" height="1.3" fill="#666"/><rect x="19.0" y="65.0" width="7.2" height="1.3" fill="#666"/><rect x="27.3" y="65.0" width="7.0" height="1.3" fill="#666"/><rect x="35.5" y="65.0" width="8.9" height="1.3" fill="#666"/><rect x="84.0" y="70.7" width="13.0" height="2.4" fill="#f2f03a"/><rect x="11.0" y="71.5" width="7.0" height="0.8" fill="#a8a8a0"/><rect x="18.9" y="71.5" width="9.8" height="0.8" fill="#a8a8a0"/><rect x="29.6" y="71.5" width="8.7" height="0.8" fill="#a8a8a0"/><rect x="39.3" y="71.5" width="9.9" height="0.8" fill="#a8a8a0"/><rect x="50.1" y="71.5" width="6.8" height="0.8" fill="#a8a8a0"/><rect x="57.8" y="71.5" width="8.9" height="0.8" fill="#a8a8a0"/><rect x="67.6" y="71.5" width="7.8" height="0.8" fill="#a8a8a0"/><rect x="76.3" y="71.5" width="5.8" height="0.8" fill="#a8a8a0"/><rect x="83.0" y="71.5" width="5.1" height="0.8" fill="#a8a8a0"/><rect x="89.0" y="71.5" width="8.0" height="0.8" fill="#a8a8a0"/><rect x="11.0" y="73.1" width="86.0" height="2.4" fill="#f2f03a"/><rect x="11.0" y="73.9" width="4.1" height="0.8" fill="#a8a8a0"/><rect x="16.0" y="73.9" width="10.3" height="0.8" fill="#a8a8a0"/><rect x="27.2" y="73.9" width="4.6" height="0.8" fill="#a8a8a0"/><rect x="32.7" y="73.9" width="3.7" height="0.8" fill="#a8a8a0"/><rect x="37.3" y="73.9" width="4.3" height="0.8" fill="#a8a8a0"/><rect x="42.5" y="73.9" width="10.5" height="0.8" fill="#a8a8a0"/><rect x="53.9" y="73.9" width="6.1" height="0.8" fill="#a8a8a0"/><rect x="60.9" y="73.9" width="4.6" height="0.8" fill="#a8a8a0"/><rect x="66.3" y="73.9" width="3.7" height="0.8" fill="#a8a8a0"/><rect x="70.9" y="73.9" width="3.8" height="0.8" fill="#a8a8a0"/><rect x="75.6" y="73.9" width="8.7" height="0.8" fill="#a8a8a0"/><rect x="85.2" y="73.9" width="8.3" height="0.8" fill="#a8a8a0"/><rect x="94.4" y="73.9" width="2.6" height="0.8" fill="#a8a8a0"/><rect x="11.0" y="75.5" width="62.0" height="2.4" fill="#f2f03a"/><rect x="11.0" y="76.3" width="9.0" height="0.8" fill="#a8a8a0"/><rect x="20.9" y="76.3" width="4.0" height="0.8" fill="#a8a8a0"/><rect x="25.8" y="76.3" width="7.9" height="0.8" fill="#a8a8a0"/><rect x="34.6" y="76.3" width="6.2" height="0.8" fill="#a8a8a0"/><rect x="41.8" y="76.3" width="9.6" height="0.8" fill="#a8a8a0"/><rect x="52.3" y="76.3" width="9.6" height="0.8" fill="#a8a8a0"/><rect x="62.9" y="76.3" width="10.1" height="0.8" fill="#a8a8a0"/><rect x="27.0" y="82.2" width="14.0" height="2.4" fill="#f2f03a"/><rect x="11.0" y="83.0" width="4.0" height="0.8" fill="#a8a8a0"/><rect x="15.9" y="83.0" width="10.0" height="0.8" fill="#a8a8a0"/><rect x="26.8" y="83.0" width="10.4" height="0.8" fill="#a8a8a0"/><rect x="38.1" y="83.0" width="10.6" height="0.8" fill="#a8a8a0"/><rect x="49.5" y="83.0" width="4.3" height="0.8" fill="#a8a8a0"/><rect x="54.7" y="83.0" width="5.0" height="0.8" fill="#a8a8a0"/><rect x="60.7" y="83.0" width="4.3" height="0.8" fill="#a8a8a0"/><rect x="65.9" y="83.0" width="3.8" height="0.8" fill="#a8a8a0"/><rect x="70.6" y="83.0" width="9.9" height="0.8" fill="#a8a8a0"/><rect x="81.3" y="83.0" width="9.6" height="0.8" fill="#a8a8a0"/><rect x="91.8" y="83.0" width="5.2" height="0.8" fill="#a8a8a0"/><rect x="11.0" y="84.6" width="34.0" height="2.4" fill="#f2f03a"/><rect x="11.0" y="85.4" width="9.7" height="0.8" fill="#a8a8a0"/><rect x="21.6" y="85.4" width="8.2" height="0.8" fill="#a8a8a0"/><rect x="30.7" y="85.4" width="5.7" height="0.8" fill="#a8a8a0"/><rect x="37.3" y="85.4" width="4.2" height="0.8" fill="#a8a8a0"/><rect x="42.4" y="85.4" width="4.2" height="0.8" fill="#a8a8a0"/><rect x="47.6" y="85.4" width="9.2" height="0.8" fill="#a8a8a0"/><rect x="57.6" y="85.4" width="5.0" height="0.8" fill="#a8a8a0"/><rect x="63.6" y="85.4" width="5.9" height="0.8" fill="#a8a8a0"/><rect x="70.4" y="85.4" width="6.7" height="0.8" fill="#a8a8a0"/><rect x="78.0" y="85.4" width="3.7" height="0.8" fill="#a8a8a0"/><rect x="82.5" y="85.4" width="5.4" height="0.8" fill="#a8a8a0"/><rect x="88.8" y="85.4" width="5.6" height="0.8" fill="#a8a8a0"/><rect x="95.4" y="85.4" width="1.6" height="0.8" fill="#a8a8a0"/><rect x="11.0" y="87.8" width="6.3" height="0.8" fill="#a8a8a0"/><rect x="18.2" y="87.8" width="5.9" height="0.8" fill="#a8a8a0"/><rect x="25.0" y="87.8" width="10.7" height="0.8" fill="#a8a8a0"/><rect x="36.6" y="87.8" width="7.3" height="0.8" fill="#a8a8a0"/><rect x="44.8" y="87.8" width="5.2" height="0.8" fill="#a8a8a0"/><rect x="79.5" y="94.2" width="17.5" height="2.4" fill="#f2f03a"/><rect x="11.0" y="95.0" width="8.1" height="0.8" fill="#a8a8a0"/><rect x="20.0" y="95.0" width="3.7" height="0.8" fill="#a8a8a0"/><rect x="24.7" y="95.0" width="6.6" height="0.8" fill="#a8a8a0"/><rect x="32.2" y="95.0" width="6.8" height="0.8" fill="#a8a8a0"/><rect x="39.8" y="95.0" width="9.3" height="0.8" fill="#a8a8a0"/><rect x="50.0" y="95.0" width="6.1" height="0.8" fill="#a8a8a0"/><rect x="57.0" y="95.0" width="8.8" height="0.8" fill="#a8a8a0"/><rect x="66.7" y="95.0" width="7.5" height="0.8" fill="#a8a8a0"/><rect x="75.2" y="95.0" width="5.1" height="0.8" fill="#a8a8a0"/><rect x="81.2" y="95.0" width="10.0" height="0.8" fill="#a8a8a0"/><rect x="92.0" y="95.0" width="4.2" height="0.8" fill="#a8a8a0"/><rect x="11.0" y="96.6" width="86.0" height="2.4" fill="#f2f03a"/><rect x="11.0" y="97.4" width="9.6" height="0.8" fill="#a8a8a0"/><rect x="21.5" y="97.4" width="4.8" height="0.8" fill="#a8a8a0"/><rect x="27.2" y="97.4" width="3.5" height="0.8" fill="#a8a8a0"/><rect x="31.6" y="97.4" width="5.0" height="0.8" fill="#a8a8a0"/><rect x="37.6" y="97.4" width="9.2" height="0.8" fill="#a8a8a0"/><rect x="47.7" y="97.4" width="10.8" height="0.8" fill="#a8a8a0"/><rect x="59.4" y="97.4" width="3.5" height="0.8" fill="#a8a8a0"/><rect x="63.8" y="97.4" width="7.2" height="0.8" fill="#a8a8a0"/><rect x="71.9" y="97.4" width="7.2" height="0.8" fill="#a8a8a0"/><rect x="80.0" y="97.4" width="9.5" height="0.8" fill="#a8a8a0"/><rect x="90.4" y="97.4" width="4.9" height="0.8" fill="#a8a8a0"/><rect x="11.0" y="99.0" width="86.0" height="2.4" fill="#f2f03a"/><rect x="11.0" y="99.8" width="7.2" height="0.8" fill="#a8a8a0"/><rect x="19.1" y="99.8" width="6.1" height="0.8" fill="#a8a8a0"/><rect x="26.1" y="99.8" width="9.7" height="0.8" fill="#a8a8a0"/><rect x="36.8" y="99.8" width="5.5" height="0.8" fill="#a8a8a0"/><rect x="43.1" y="99.8" width="10.6" height="0.8" fill="#a8a8a0"/><rect x="54.6" y="99.8" width="5.6" height="0.8" fill="#a8a8a0"/><rect x="61.1" y="99.8" width="5.1" height="0.8" fill="#a8a8a0"/><rect x="67.1" y="99.8" width="8.7" height="0.8" fill="#a8a8a0"/><rect x="76.8" y="99.8" width="7.2" height="0.8" fill="#a8a8a0"/><rect x="84.9" y="99.8" width="4.3" height="0.8" fill="#a8a8a0"/><rect x="90.1" y="99.8" width="6.9" height="0.8" fill="#a8a8a0"/><rect x="11.0" y="101.4" width="86.0" height="2.4" fill="#f2f03a"/><rect x="11.0" y="102.2" width="4.1" height="0.8" fill="#a8a8a0"/><rect x="16.0" y="102.2" width="9.4" height="0.8" fill="#a8a8a0"/><rect x="26.3" y="102.2" width="8.7" height="0.8" fill="#a8a8a0"/><rect x="35.9" y="102.2" width="9.4" height="0.8" fill="#a8a8a0"/><rect x="46.2" y="102.2" width="8.2" height="0.8" fill="#a8a8a0"/><rect x="55.4" y="102.2" width="6.2" height="0.8" fill="#a8a8a0"/><rect x="62.4" y="102.2" width="6.5" height="0.8" fill="#a8a8a0"/><rect x="69.8" y="102.2" width="6.5" height="0.8" fill="#a8a8a0"/><rect x="77.2" y="102.2" width="10.2" height="0.8" fill="#a8a8a0"/><rect x="88.3" y="102.2" width="4.1" height="0.8" fill="#a8a8a0"/><rect x="93.3" y="102.2" width="3.7" height="0.8" fill="#a8a8a0"/><rect x="11.0" y="103.8" width="22.0" height="2.4" fill="#f2f03a"/><rect x="11.0" y="104.6" width="3.7" height="0.8" fill="#a8a8a0"/><rect x="15.6" y="104.6" width="5.0" height="0.8" fill="#a8a8a0"/><rect x="21.5" y="104.6" width="5.5" height="0.8" fill="#a8a8a0"/><rect x="27.9" y="104.6" width="5.1" height="0.8" fill="#a8a8a0"/><rect x="11.0" y="113.5" width="6.0" height="1.3" fill="#666"/><rect x="18.2" y="113.5" width="5.3" height="1.3" fill="#666"/><rect x="24.7" y="113.5" width="8.3" height="1.3" fill="#666"/><rect x="11.0" y="120.0" width="5.3" height="0.8" fill="#a8a8a0"/><rect x="17.2" y="120.0" width="7.0" height="0.8" fill="#a8a8a0"/><rect x="25.0" y="120.0" width="7.5" height="0.8" fill="#a8a8a0"/><rect x="33.4" y="120.0" width="9.2" height="0.8" fill="#a8a8a0"/><rect x="43.5" y="120.0" width="9.1" height="0.8" fill="#a8a8a0"/><rect x="53.5" y="120.0" width="8.3" height="0.8" fill="#a8a8a0"/><rect x="62.7" y="120.0" width="6.1" height="0.8" fill="#a8a8a0"/><rect x="69.8" y="120.0" width="5.9" height="0.8" fill="#a8a8a0"/><rect x="76.6" y="120.0" width="4.7" height="0.8" fill="#a8a8a0"/><rect x="82.2" y="120.0" width="9.8" height="0.8" fill="#a8a8a0"/><rect x="92.9" y="120.0" width="4.1" height="0.8" fill="#a8a8a0"/><rect x="41.7" y="121.6" width="55.3" height="2.4" fill="#f2f03a"/><rect x="11.0" y="122.4" width="9.1" height="0.8" fill="#a8a8a0"/><rect x="21.0" y="122.4" width="4.8" height="0.8" fill="#a8a8a0"/><rect x="26.6" y="122.4" width="6.8" height="0.8" fill="#a8a8a0"/><rect x="34.3" y="122.4" width="9.3" height="0.8" fill="#a8a8a0"/><rect x="44.5" y="122.4" width="7.8" height="0.8" fill="#a8a8a0"/><rect x="53.3" y="122.4" width="4.4" height="0.8" fill="#a8a8a0"/><rect x="58.6" y="122.4" width="7.0" height="0.8" fill="#a8a8a0"/><rect x="66.5" y="122.4" width="10.1" height="0.8" fill="#a8a8a0"/><rect x="77.5" y="122.4" width="5.3" height="0.8" fill="#a8a8a0"/><rect x="83.7" y="122.4" width="4.9" height="0.8" fill="#a8a8a0"/><rect x="89.5" y="122.4" width="5.8" height="0.8" fill="#a8a8a0"/><rect x="11.0" y="124.0" width="29.0" height="2.4" fill="#f2f03a"/><rect x="11.0" y="124.8" width="8.8" height="0.8" fill="#a8a8a0"/><rect x="20.7" y="124.8" width="9.8" height="0.8" fill="#a8a8a0"/><rect x="31.4" y="124.8" width="4.7" height="0.8" fill="#a8a8a0"/><rect x="37.0" y="124.8" width="3.0" height="0.8" fill="#a8a8a0"/></svg><div class="pg">3p</div></div>
<div class="tt">Peru has had 5<br>presidents in the...</div>
<div class="av"><svg width="24" height="24" viewBox="0 0 24 24"><circle cx="12" cy="12" r="11.5" fill="#dedee0" stroke="#d6d6da" stroke-width="1"/><ellipse cx="12" cy="9" rx="4.3" ry="5.6" fill="#fbfbfb"/><path d="M10 13 V15 Q6 16 5 22 Q12 25 19 22 Q18 16 14 15 V13 Z" fill="#fbfbfb"/></svg></div>
<div class="nm">lise</div>
<div class="lk"><svg width="11" height="11" viewBox="0 0 11 11"><path d="M1 5 H3 V10 H1 Z M3 5 L5.5 1 Q7 1 6.8 3 L6.5 4.5 H9.5 Q10.5 4.7 10.2 6 L9.3 9.3 Q9 10 8 10 H3" fill="none" stroke="#9a9a9a" stroke-width="0.9" stroke-linejoin="round"/></svg></div>
<div class="ct">1</div>
<div class="vw">10 Views</div>
<div class="bm"><svg width="14" height="15" viewBox="0 0 14 15"><path d="M1.4 3.8 Q1.4 1.2 4 1.2 H10 Q12.6 1.2 12.6 3.8 V13.2 L7 9.4 L1.4 13.2 Z" fill="none" stroke="#3a66c2" stroke-width="1.8" stroke-linejoin="round"/></svg></div>
</div>
<div class="abs darkb"><svg width="864" height="30" style="position:absolute;left:0;top:0"><path d="M366 0 H400 L393 18 H359 Z" fill="#7e7c72" opacity="0.9"/><path d="M356 18 L369 6" stroke="#2f3333" stroke-width="2"/></svg></div>
<div class="abs status"><span>www.udocz.com/apuntes/1314104/peru-tuvo-5-presidentes-en-los-ultimos-6-anos</span></div>
<div class="abs blackbar"></div>
<svg class="abs" style="left:0;top:0;z-index:30" width="1024" height="508" viewBox="0 0 1024 508"><path d="M521.2 30.7 L536 28.3 L533 32.7 L739 146 L738.5 146.4 L529.6 39.6 L527.4 44.3 Z" fill="#ea3349"/></svg>
<div class="abs" style="left:513px;top:14px;width:1px;height:15px;background:#333;z-index:5"></div>
</body></html>
